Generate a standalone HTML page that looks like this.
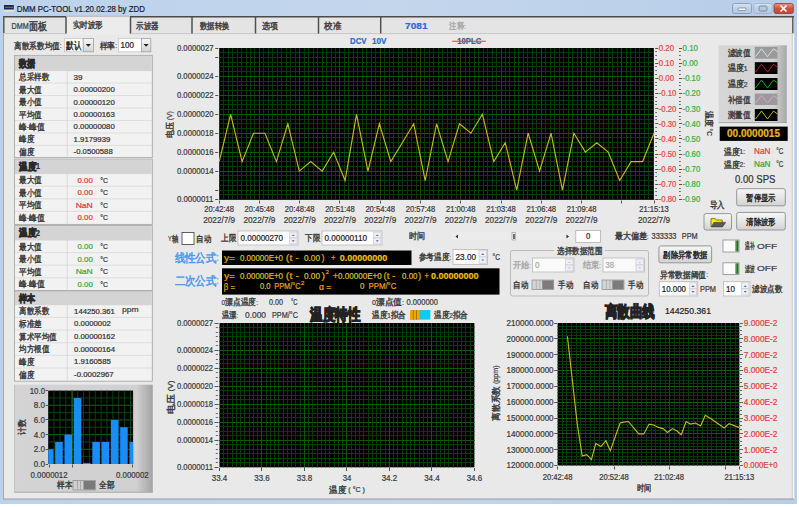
<!DOCTYPE html>
<html><head><meta charset="utf-8"><title>DMM PC-TOOL</title>
<style>
html,body{margin:0;padding:0;background:#fff;width:799px;height:507px;overflow:hidden}
svg{display:block;font-family:"Liberation Sans", sans-serif}
</style></head><body>
<svg width="799" height="507" viewBox="0 0 799 507">
<defs>
<linearGradient id="tb" x1="0" y1="0" x2="1" y2="0"><stop offset="0" stop-color="#bcd2ec"/><stop offset="0.5" stop-color="#c3d6ec"/><stop offset="1" stop-color="#b7cde8"/></linearGradient>
<linearGradient id="btn" x1="0" y1="0" x2="0" y2="1"><stop offset="0" stop-color="#f6f6f6"/><stop offset="0.5" stop-color="#e6e6e6"/><stop offset="1" stop-color="#d2d2d2"/></linearGradient>
<linearGradient id="leg" x1="0" y1="0" x2="1" y2="0"><stop offset="0" stop-color="#d6d6d6"/><stop offset="0.8" stop-color="#d2d2d2"/><stop offset="1" stop-color="#a8a8a8"/></linearGradient>
<linearGradient id="hist" x1="0" y1="0" x2="1" y2="0"><stop offset="0" stop-color="#d4d4d4"/><stop offset="0.88" stop-color="#d0d0d0"/><stop offset="1" stop-color="#a4a4a4"/></linearGradient>
<linearGradient id="close" x1="0" y1="0" x2="0" y2="1"><stop offset="0" stop-color="#e89a8a"/><stop offset="0.5" stop-color="#d0523e"/><stop offset="1" stop-color="#c84632"/></linearGradient>
<linearGradient id="wbtn" x1="0" y1="0" x2="0" y2="1"><stop offset="0" stop-color="#d4e2f2"/><stop offset="0.5" stop-color="#bcd0e8"/><stop offset="1" stop-color="#b4cae4"/></linearGradient>
</defs>
<rect x="0.00" y="0.00" width="797.00" height="504.00" fill="url(#tb)"/>
<rect x="4.00" y="5.00" width="9.80" height="4.60" fill="#1c2858"/>
<rect x="5.00" y="6.80" width="8.40" height="1.20" fill="#6a6a50"/>
<rect x="4.00" y="9.80" width="9.80" height="1.80" fill="#eee4c0"/>
<text x="16.70" y="11.71" font-size="9.6" fill="#1a1a2a" stroke="#1a1a2a" stroke-width="0.22" textLength="128.20" lengthAdjust="spacingAndGlyphs">DMM PC-TOOL v1.20.02.28 by ZDD</text>
<rect x="732.50" y="3.50" width="19.00" height="10.00" fill="url(#wbtn)" stroke="#7f93b0" stroke-width="0.8" rx="2"/>
<rect x="738.00" y="8.00" width="8.00" height="2.50" fill="#f8f8f8" stroke="#5a6a80" stroke-width="0.6" rx="1"/>
<rect x="753.70" y="3.50" width="18.50" height="10.00" fill="url(#wbtn)" stroke="#9fb3cc" stroke-width="0.8" rx="2"/>
<rect x="759.00" y="6.00" width="8.00" height="5.00" fill="#b8c8dc" stroke="#6a7a90" stroke-width="0.8" rx="1.5"/>
<rect x="774.00" y="3.50" width="19.30" height="10.00" fill="url(#close)" stroke="#8a3a30" stroke-width="0.8" rx="2"/>
<line x1="780.50" y1="5.50" x2="786.50" y2="11.50" stroke="#ffffff" stroke-width="1.6"/>
<line x1="786.50" y1="5.50" x2="780.50" y2="11.50" stroke="#ffffff" stroke-width="1.6"/>
<rect x="3.00" y="16.00" width="791.00" height="483.00" fill="#e9e9e9"/>
<rect x="3.00" y="16.50" width="791.00" height="17.00" fill="#e4e4e4"/>
<rect x="66.00" y="16.00" width="64.00" height="19.00" fill="#ececec"/>
<line x1="3.00" y1="16.80" x2="66.00" y2="16.80" stroke="#4a4a4a" stroke-width="1.4"/>
<line x1="130.00" y1="16.80" x2="794.00" y2="16.80" stroke="#4a4a4a" stroke-width="1.4"/>
<line x1="66.00" y1="16.30" x2="130.00" y2="16.30" stroke="#a8a8a8" stroke-width="0.8"/>
<line x1="3.80" y1="16.00" x2="3.80" y2="34.00" stroke="#555" stroke-width="1.5"/>
<line x1="3.50" y1="34.00" x2="3.50" y2="499.00" stroke="#a8a8a8" stroke-width="1"/>
<line x1="792.80" y1="16.00" x2="792.80" y2="34.00" stroke="#555" stroke-width="1.4"/>
<line x1="792.30" y1="34.00" x2="792.30" y2="499.00" stroke="#c4c4c4" stroke-width="1"/>
<rect x="792.80" y="34.00" width="1.50" height="465.00" fill="#f6f6f6"/>
<line x1="3.00" y1="499.00" x2="794.00" y2="499.00" stroke="#9a9a9a" stroke-width="1"/>
<line x1="3.00" y1="33.60" x2="66.00" y2="33.60" stroke="#c8c8c8" stroke-width="1"/>
<line x1="130.00" y1="33.60" x2="794.00" y2="33.60" stroke="#c8c8c8" stroke-width="1"/>
<line x1="66.00" y1="17.00" x2="66.00" y2="33.50" stroke="#505050" stroke-width="1.5"/>
<line x1="130.50" y1="17.00" x2="130.50" y2="33.50" stroke="#505050" stroke-width="1.5"/>
<line x1="192.00" y1="17.00" x2="192.00" y2="33.50" stroke="#505050" stroke-width="1.5"/>
<line x1="255.50" y1="17.00" x2="255.50" y2="33.50" stroke="#505050" stroke-width="1.5"/>
<line x1="318.50" y1="17.00" x2="318.50" y2="33.50" stroke="#505050" stroke-width="1.5"/>
<line x1="380.70" y1="17.00" x2="380.70" y2="33.50" stroke="#505050" stroke-width="1.5"/>
<text x="11.50" y="29.12" font-size="8.8" fill="#3a3a3a" stroke="#3a3a3a" stroke-width="0.22" textLength="35.40" lengthAdjust="spacingAndGlyphs">DMM<tspan dy="0.70" font-size="10.56" stroke-width="0.44">面板</tspan></text>
<text x="72.60" y="27.30" font-size="7.6" fill="#3a3a3a" stroke="#3a3a3a" stroke-width="0.22" textLength="30.40" lengthAdjust="spacingAndGlyphs"><tspan dy="0.61" font-size="9.12" stroke-width="0.40">实时波形</tspan></text>
<text x="136.30" y="28.70" font-size="7.6" fill="#3a3a3a" stroke="#3a3a3a" stroke-width="0.22" textLength="22.80" lengthAdjust="spacingAndGlyphs"><tspan dy="0.61" font-size="9.12" stroke-width="0.40">示波器</tspan></text>
<text x="199.80" y="28.70" font-size="7.6" fill="#3a3a3a" stroke="#3a3a3a" stroke-width="0.22" textLength="29.60" lengthAdjust="spacingAndGlyphs"><tspan dy="0.61" font-size="9.12" stroke-width="0.40">数据转换</tspan></text>
<text x="262.00" y="28.70" font-size="7.6" fill="#3a3a3a" stroke="#3a3a3a" stroke-width="0.22" textLength="16.00" lengthAdjust="spacingAndGlyphs"><tspan dy="0.61" font-size="9.12" stroke-width="0.40">选项</tspan></text>
<text x="324.00" y="28.70" font-size="7.6" fill="#3a3a3a" stroke="#3a3a3a" stroke-width="0.22" textLength="17.00" lengthAdjust="spacingAndGlyphs"><tspan dy="0.61" font-size="9.12" stroke-width="0.40">校准</tspan></text>
<text x="405.10" y="29.04" font-size="9.4" fill="#2b6ad6" stroke="#2b6ad6" stroke-width="0.22" font-weight="bold" textLength="22.50" lengthAdjust="spacingAndGlyphs">7081</text>
<text x="449.20" y="28.70" font-size="7.6" fill="#a8a8a8" stroke="#a8a8a8" stroke-width="0.22" textLength="16.80" lengthAdjust="spacingAndGlyphs"><tspan dy="0.61" font-size="9.12" stroke-width="0.40">注释</tspan><tspan dy="-0.61">:</tspan></text>
<text x="350.00" y="44.02" font-size="8.5" fill="#2b6ad6" stroke="#2b6ad6" stroke-width="0.22" font-weight="bold" textLength="16.50" lengthAdjust="spacingAndGlyphs">DCV</text>
<text x="372.00" y="44.02" font-size="8.5" fill="#2b6ad6" stroke="#2b6ad6" stroke-width="0.22" font-weight="bold" textLength="14.50" lengthAdjust="spacingAndGlyphs">10V</text>
<text x="457.20" y="44.02" font-size="8.5" fill="#4a5a98" stroke="#4a5a98" stroke-width="0.22" font-weight="bold" textLength="24.10" lengthAdjust="spacingAndGlyphs">10PLC</text>
<line x1="452.20" y1="41.30" x2="485.90" y2="41.30" stroke="#e04040" stroke-width="1.1"/>
<text x="14.10" y="47.90" font-size="7.6" fill="#3a3a3a" stroke="#3a3a3a" stroke-width="0.22" textLength="47.50" lengthAdjust="spacingAndGlyphs"><tspan dy="0.61" font-size="9.12" stroke-width="0.40">离散系数均值</tspan><tspan dy="-0.61">:</tspan></text>
<rect x="64.40" y="38.60" width="18.80" height="13.20" fill="#ffffff" stroke="#c8c8c8" stroke-width="0.8"/>
<rect x="83.20" y="38.60" width="10.30" height="13.20" fill="url(#btn)" stroke="#a0a0a0" stroke-width="0.8"/>
<path d="M85.75 44.00 L90.95 44.00 L88.35 46.80 Z" fill="#202020"/>
<text x="66.40" y="48.18" font-size="8.4" fill="#222" stroke="#222" stroke-width="0.22" textLength="15.10" lengthAdjust="spacingAndGlyphs"><tspan dy="0.67" font-size="10.08" stroke-width="0.42">默认</tspan></text>
<text x="99.70" y="47.90" font-size="7.6" fill="#3a3a3a" stroke="#3a3a3a" stroke-width="0.22" textLength="17.30" lengthAdjust="spacingAndGlyphs"><tspan dy="0.61" font-size="9.12" stroke-width="0.40">样率</tspan><tspan dy="-0.61">:</tspan></text>
<rect x="118.50" y="38.60" width="22.90" height="13.20" fill="#ffffff" stroke="#c8c8c8" stroke-width="0.8"/>
<rect x="141.40" y="38.60" width="9.40" height="13.20" fill="url(#btn)" stroke="#a0a0a0" stroke-width="0.8"/>
<path d="M143.50 44.00 L148.70 44.00 L146.10 46.80 Z" fill="#202020"/>
<text x="120.50" y="48.18" font-size="8.4" fill="#222" stroke="#222" stroke-width="0.22" textLength="13.40" lengthAdjust="spacingAndGlyphs">100</text>
<rect x="14.50" y="55.40" width="137.80" height="102.20" fill="#f2f2f2" stroke="#a8a8a8" stroke-width="0.9"/>
<rect x="15.00" y="55.90" width="136.80" height="15.20" fill="#d4d4d4"/>
<text x="19.10" y="65.98" font-size="8.4" fill="#2a2a2a" stroke="#2a2a2a" stroke-width="0.22" font-weight="bold" textLength="16.00" lengthAdjust="spacingAndGlyphs"><tspan dy="0.67" font-size="10.08" stroke-width="0.76">数据</tspan></text>
<line x1="67.30" y1="70.60" x2="67.30" y2="157.60" stroke="#d6d6d6" stroke-width="0.8"/>
<text x="19.10" y="79.53" font-size="7.6" fill="#3a3a3a" stroke="#3a3a3a" stroke-width="0.22" textLength="30.00" lengthAdjust="spacingAndGlyphs"><tspan dy="0.61" font-size="9.12" stroke-width="0.40">总采样数</tspan></text>
<text x="73.60" y="79.60" font-size="7.8" fill="#333" stroke="#333" stroke-width="0.22" textLength="9.00" lengthAdjust="spacingAndGlyphs">39</text>
<line x1="15.00" y1="83.07" x2="152.00" y2="83.07" stroke="#d8d8d8" stroke-width="0.8"/>
<text x="19.10" y="92.00" font-size="7.6" fill="#3a3a3a" stroke="#3a3a3a" stroke-width="0.22" textLength="22.50" lengthAdjust="spacingAndGlyphs"><tspan dy="0.61" font-size="9.12" stroke-width="0.40">最大值</tspan></text>
<text x="73.60" y="92.07" font-size="7.8" fill="#333" stroke="#333" stroke-width="0.22" textLength="41.20" lengthAdjust="spacingAndGlyphs">0.00000200</text>
<line x1="15.00" y1="95.54" x2="152.00" y2="95.54" stroke="#d8d8d8" stroke-width="0.8"/>
<text x="19.10" y="104.47" font-size="7.6" fill="#3a3a3a" stroke="#3a3a3a" stroke-width="0.22" textLength="22.50" lengthAdjust="spacingAndGlyphs"><tspan dy="0.61" font-size="9.12" stroke-width="0.40">最小值</tspan></text>
<text x="73.60" y="104.54" font-size="7.8" fill="#333" stroke="#333" stroke-width="0.22" textLength="41.20" lengthAdjust="spacingAndGlyphs">0.00000120</text>
<line x1="15.00" y1="108.01" x2="152.00" y2="108.01" stroke="#d8d8d8" stroke-width="0.8"/>
<text x="19.10" y="116.94" font-size="7.6" fill="#3a3a3a" stroke="#3a3a3a" stroke-width="0.22" textLength="22.50" lengthAdjust="spacingAndGlyphs"><tspan dy="0.61" font-size="9.12" stroke-width="0.40">平均值</tspan></text>
<text x="73.60" y="117.01" font-size="7.8" fill="#333" stroke="#333" stroke-width="0.22" textLength="41.20" lengthAdjust="spacingAndGlyphs">0.00000163</text>
<line x1="15.00" y1="120.48" x2="152.00" y2="120.48" stroke="#d8d8d8" stroke-width="0.8"/>
<text x="19.10" y="129.41" font-size="7.6" fill="#3a3a3a" stroke="#3a3a3a" stroke-width="0.22" textLength="25.10" lengthAdjust="spacingAndGlyphs"><tspan dy="0.61" font-size="9.12" stroke-width="0.40">峰</tspan><tspan dy="-0.61">-</tspan><tspan dy="0.61" font-size="9.12" stroke-width="0.40">峰值</tspan></text>
<text x="73.60" y="129.48" font-size="7.8" fill="#333" stroke="#333" stroke-width="0.22" textLength="41.20" lengthAdjust="spacingAndGlyphs">0.00000080</text>
<line x1="15.00" y1="132.95" x2="152.00" y2="132.95" stroke="#d8d8d8" stroke-width="0.8"/>
<text x="19.10" y="141.88" font-size="7.6" fill="#3a3a3a" stroke="#3a3a3a" stroke-width="0.22" textLength="15.00" lengthAdjust="spacingAndGlyphs"><tspan dy="0.61" font-size="9.12" stroke-width="0.40">峰度</tspan></text>
<text x="73.60" y="141.95" font-size="7.8" fill="#333" stroke="#333" stroke-width="0.22" textLength="36.70" lengthAdjust="spacingAndGlyphs">1.9179939</text>
<line x1="15.00" y1="145.42" x2="152.00" y2="145.42" stroke="#d8d8d8" stroke-width="0.8"/>
<text x="19.10" y="154.35" font-size="7.6" fill="#3a3a3a" stroke="#3a3a3a" stroke-width="0.22" textLength="15.00" lengthAdjust="spacingAndGlyphs"><tspan dy="0.61" font-size="9.12" stroke-width="0.40">偏度</tspan></text>
<text x="73.60" y="154.42" font-size="7.8" fill="#333" stroke="#333" stroke-width="0.22" textLength="39.10" lengthAdjust="spacingAndGlyphs">-0.0500588</text>
<rect x="14.50" y="159.20" width="137.80" height="65.20" fill="#f2f2f2" stroke="#a8a8a8" stroke-width="0.9"/>
<rect x="15.00" y="159.70" width="136.80" height="14.40" fill="#d4d4d4"/>
<text x="19.10" y="169.38" font-size="8.4" fill="#2a2a2a" stroke="#2a2a2a" stroke-width="0.22" font-weight="bold" textLength="21.00" lengthAdjust="spacingAndGlyphs"><tspan dy="0.67" font-size="10.08" stroke-width="0.76">温度</tspan><tspan dy="-0.67">1</tspan></text>
<line x1="67.30" y1="173.60" x2="67.30" y2="224.40" stroke="#d6d6d6" stroke-width="0.8"/>
<text x="19.10" y="182.60" font-size="7.6" fill="#3a3a3a" stroke="#3a3a3a" stroke-width="0.22" textLength="22.50" lengthAdjust="spacingAndGlyphs"><tspan dy="0.61" font-size="9.12" stroke-width="0.40">最大值</tspan></text>
<text x="77.50" y="182.67" font-size="7.8" fill="#e03838" stroke="#e03838" stroke-width="0.22" textLength="15.30" lengthAdjust="spacingAndGlyphs">0.00</text>
<text x="100.20" y="182.67" font-size="7.8" fill="#3a3a3a" stroke="#3a3a3a" stroke-width="0.22" textLength="7.80" lengthAdjust="spacingAndGlyphs">°C</text>
<line x1="15.00" y1="186.20" x2="152.00" y2="186.20" stroke="#d8d8d8" stroke-width="0.8"/>
<text x="19.10" y="195.20" font-size="7.6" fill="#3a3a3a" stroke="#3a3a3a" stroke-width="0.22" textLength="22.50" lengthAdjust="spacingAndGlyphs"><tspan dy="0.61" font-size="9.12" stroke-width="0.40">最小值</tspan></text>
<text x="77.50" y="195.27" font-size="7.8" fill="#e03838" stroke="#e03838" stroke-width="0.22" textLength="15.30" lengthAdjust="spacingAndGlyphs">0.00</text>
<text x="100.20" y="195.27" font-size="7.8" fill="#3a3a3a" stroke="#3a3a3a" stroke-width="0.22" textLength="7.80" lengthAdjust="spacingAndGlyphs">°C</text>
<line x1="15.00" y1="198.80" x2="152.00" y2="198.80" stroke="#d8d8d8" stroke-width="0.8"/>
<text x="19.10" y="207.80" font-size="7.6" fill="#3a3a3a" stroke="#3a3a3a" stroke-width="0.22" textLength="22.50" lengthAdjust="spacingAndGlyphs"><tspan dy="0.61" font-size="9.12" stroke-width="0.40">平均值</tspan></text>
<text x="75.70" y="207.87" font-size="7.8" fill="#e03838" stroke="#e03838" stroke-width="0.22" textLength="17.10" lengthAdjust="spacingAndGlyphs">NaN</text>
<text x="100.20" y="207.87" font-size="7.8" fill="#3a3a3a" stroke="#3a3a3a" stroke-width="0.22" textLength="7.80" lengthAdjust="spacingAndGlyphs">°C</text>
<line x1="15.00" y1="211.40" x2="152.00" y2="211.40" stroke="#d8d8d8" stroke-width="0.8"/>
<text x="19.10" y="220.40" font-size="7.6" fill="#3a3a3a" stroke="#3a3a3a" stroke-width="0.22" textLength="25.10" lengthAdjust="spacingAndGlyphs"><tspan dy="0.61" font-size="9.12" stroke-width="0.40">峰</tspan><tspan dy="-0.61">-</tspan><tspan dy="0.61" font-size="9.12" stroke-width="0.40">峰值</tspan></text>
<text x="77.50" y="220.47" font-size="7.8" fill="#e03838" stroke="#e03838" stroke-width="0.22" textLength="15.30" lengthAdjust="spacingAndGlyphs">0.00</text>
<text x="100.20" y="220.47" font-size="7.8" fill="#3a3a3a" stroke="#3a3a3a" stroke-width="0.22" textLength="7.80" lengthAdjust="spacingAndGlyphs">°C</text>
<rect x="14.50" y="225.60" width="137.80" height="65.00" fill="#f2f2f2" stroke="#a8a8a8" stroke-width="0.9"/>
<rect x="15.00" y="226.10" width="136.80" height="14.40" fill="#d4d4d4"/>
<text x="19.10" y="235.78" font-size="8.4" fill="#2a2a2a" stroke="#2a2a2a" stroke-width="0.22" font-weight="bold" textLength="21.00" lengthAdjust="spacingAndGlyphs"><tspan dy="0.67" font-size="10.08" stroke-width="0.76">温度</tspan><tspan dy="-0.67">2</tspan></text>
<line x1="67.30" y1="240.00" x2="67.30" y2="290.60" stroke="#d6d6d6" stroke-width="0.8"/>
<text x="19.10" y="249.00" font-size="7.6" fill="#3a3a3a" stroke="#3a3a3a" stroke-width="0.22" textLength="22.50" lengthAdjust="spacingAndGlyphs"><tspan dy="0.61" font-size="9.12" stroke-width="0.40">最大值</tspan></text>
<text x="77.50" y="249.07" font-size="7.8" fill="#38a838" stroke="#38a838" stroke-width="0.22" textLength="15.30" lengthAdjust="spacingAndGlyphs">0.00</text>
<text x="100.20" y="249.07" font-size="7.8" fill="#3a3a3a" stroke="#3a3a3a" stroke-width="0.22" textLength="7.80" lengthAdjust="spacingAndGlyphs">°C</text>
<line x1="15.00" y1="252.60" x2="152.00" y2="252.60" stroke="#d8d8d8" stroke-width="0.8"/>
<text x="19.10" y="261.60" font-size="7.6" fill="#3a3a3a" stroke="#3a3a3a" stroke-width="0.22" textLength="22.50" lengthAdjust="spacingAndGlyphs"><tspan dy="0.61" font-size="9.12" stroke-width="0.40">最小值</tspan></text>
<text x="77.50" y="261.67" font-size="7.8" fill="#38a838" stroke="#38a838" stroke-width="0.22" textLength="15.30" lengthAdjust="spacingAndGlyphs">0.00</text>
<text x="100.20" y="261.67" font-size="7.8" fill="#3a3a3a" stroke="#3a3a3a" stroke-width="0.22" textLength="7.80" lengthAdjust="spacingAndGlyphs">°C</text>
<line x1="15.00" y1="265.20" x2="152.00" y2="265.20" stroke="#d8d8d8" stroke-width="0.8"/>
<text x="19.10" y="274.20" font-size="7.6" fill="#3a3a3a" stroke="#3a3a3a" stroke-width="0.22" textLength="22.50" lengthAdjust="spacingAndGlyphs"><tspan dy="0.61" font-size="9.12" stroke-width="0.40">平均值</tspan></text>
<text x="75.70" y="274.27" font-size="7.8" fill="#38a838" stroke="#38a838" stroke-width="0.22" textLength="17.10" lengthAdjust="spacingAndGlyphs">NaN</text>
<text x="100.20" y="274.27" font-size="7.8" fill="#3a3a3a" stroke="#3a3a3a" stroke-width="0.22" textLength="7.80" lengthAdjust="spacingAndGlyphs">°C</text>
<line x1="15.00" y1="277.80" x2="152.00" y2="277.80" stroke="#d8d8d8" stroke-width="0.8"/>
<text x="19.10" y="286.80" font-size="7.6" fill="#3a3a3a" stroke="#3a3a3a" stroke-width="0.22" textLength="25.10" lengthAdjust="spacingAndGlyphs"><tspan dy="0.61" font-size="9.12" stroke-width="0.40">峰</tspan><tspan dy="-0.61">-</tspan><tspan dy="0.61" font-size="9.12" stroke-width="0.40">峰值</tspan></text>
<text x="77.50" y="286.87" font-size="7.8" fill="#38a838" stroke="#38a838" stroke-width="0.22" textLength="15.30" lengthAdjust="spacingAndGlyphs">0.00</text>
<text x="100.20" y="286.87" font-size="7.8" fill="#3a3a3a" stroke="#3a3a3a" stroke-width="0.22" textLength="7.80" lengthAdjust="spacingAndGlyphs">°C</text>
<rect x="14.50" y="291.20" width="137.80" height="90.00" fill="#f2f2f2" stroke="#a8a8a8" stroke-width="0.9"/>
<rect x="15.00" y="291.70" width="136.80" height="13.50" fill="#d4d4d4"/>
<text x="19.10" y="300.93" font-size="8.4" fill="#2a2a2a" stroke="#2a2a2a" stroke-width="0.22" font-weight="bold" textLength="16.00" lengthAdjust="spacingAndGlyphs"><tspan dy="0.67" font-size="10.08" stroke-width="0.76">样本</tspan></text>
<line x1="67.30" y1="304.70" x2="67.30" y2="381.20" stroke="#d6d6d6" stroke-width="0.8"/>
<text x="19.10" y="313.73" font-size="7.6" fill="#3a3a3a" stroke="#3a3a3a" stroke-width="0.22" textLength="30.00" lengthAdjust="spacingAndGlyphs"><tspan dy="0.61" font-size="9.12" stroke-width="0.40">离散系数</tspan></text>
<text x="74.10" y="313.80" font-size="7.8" fill="#333" stroke="#333" stroke-width="0.22" textLength="40.70" lengthAdjust="spacingAndGlyphs">144250.361</text>
<text x="122.00" y="311.87" font-size="8" fill="#3a3a3a" stroke="#3a3a3a" stroke-width="0.22" textLength="16.60" lengthAdjust="spacingAndGlyphs">ppm</text>
<line x1="15.00" y1="317.37" x2="152.00" y2="317.37" stroke="#d8d8d8" stroke-width="0.8"/>
<text x="19.10" y="326.40" font-size="7.6" fill="#3a3a3a" stroke="#3a3a3a" stroke-width="0.22" textLength="22.50" lengthAdjust="spacingAndGlyphs"><tspan dy="0.61" font-size="9.12" stroke-width="0.40">标准差</tspan></text>
<text x="74.10" y="326.47" font-size="7.8" fill="#333" stroke="#333" stroke-width="0.22" textLength="36.70" lengthAdjust="spacingAndGlyphs">0.0000002</text>
<line x1="15.00" y1="330.04" x2="152.00" y2="330.04" stroke="#d8d8d8" stroke-width="0.8"/>
<text x="19.10" y="339.07" font-size="7.6" fill="#3a3a3a" stroke="#3a3a3a" stroke-width="0.22" textLength="37.50" lengthAdjust="spacingAndGlyphs"><tspan dy="0.61" font-size="9.12" stroke-width="0.40">算术平均值</tspan></text>
<text x="74.10" y="339.14" font-size="7.8" fill="#333" stroke="#333" stroke-width="0.22" textLength="40.90" lengthAdjust="spacingAndGlyphs">0.00000162</text>
<line x1="15.00" y1="342.71" x2="152.00" y2="342.71" stroke="#d8d8d8" stroke-width="0.8"/>
<text x="19.10" y="351.74" font-size="7.6" fill="#3a3a3a" stroke="#3a3a3a" stroke-width="0.22" textLength="30.00" lengthAdjust="spacingAndGlyphs"><tspan dy="0.61" font-size="9.12" stroke-width="0.40">均方根值</tspan></text>
<text x="74.10" y="351.81" font-size="7.8" fill="#333" stroke="#333" stroke-width="0.22" textLength="40.90" lengthAdjust="spacingAndGlyphs">0.00000164</text>
<line x1="15.00" y1="355.38" x2="152.00" y2="355.38" stroke="#d8d8d8" stroke-width="0.8"/>
<text x="19.10" y="364.41" font-size="7.6" fill="#3a3a3a" stroke="#3a3a3a" stroke-width="0.22" textLength="15.00" lengthAdjust="spacingAndGlyphs"><tspan dy="0.61" font-size="9.12" stroke-width="0.40">峰度</tspan></text>
<text x="74.10" y="364.48" font-size="7.8" fill="#333" stroke="#333" stroke-width="0.22" textLength="36.70" lengthAdjust="spacingAndGlyphs">1.9160585</text>
<line x1="15.00" y1="368.05" x2="152.00" y2="368.05" stroke="#d8d8d8" stroke-width="0.8"/>
<text x="19.10" y="377.08" font-size="7.6" fill="#3a3a3a" stroke="#3a3a3a" stroke-width="0.22" textLength="15.00" lengthAdjust="spacingAndGlyphs"><tspan dy="0.61" font-size="9.12" stroke-width="0.40">偏度</tspan></text>
<text x="74.10" y="377.15" font-size="7.8" fill="#333" stroke="#333" stroke-width="0.22" textLength="39.60" lengthAdjust="spacingAndGlyphs">-0.0002967</text>
<rect x="14.40" y="384.70" width="138.40" height="107.70" fill="url(#hist)"/>
<line x1="14.40" y1="492.20" x2="152.80" y2="492.20" stroke="#a8a8a8" stroke-width="1"/>
<line x1="14.60" y1="384.70" x2="14.60" y2="492.40" stroke="#bdbdbd" stroke-width="0.8"/>
<rect x="48.20" y="390.60" width="84.90" height="73.40" fill="#000"/>
<line x1="48.20" y1="397.94" x2="133.10" y2="397.94" stroke="#0c4a0c" stroke-width="0.9"/>
<line x1="48.20" y1="405.28" x2="133.10" y2="405.28" stroke="#137013" stroke-width="0.9"/>
<line x1="48.20" y1="412.62" x2="133.10" y2="412.62" stroke="#0c4a0c" stroke-width="0.9"/>
<line x1="48.20" y1="419.96" x2="133.10" y2="419.96" stroke="#137013" stroke-width="0.9"/>
<line x1="48.20" y1="427.30" x2="133.10" y2="427.30" stroke="#0c4a0c" stroke-width="0.9"/>
<line x1="48.20" y1="434.64" x2="133.10" y2="434.64" stroke="#137013" stroke-width="0.9"/>
<line x1="48.20" y1="441.98" x2="133.10" y2="441.98" stroke="#0c4a0c" stroke-width="0.9"/>
<line x1="48.20" y1="449.32" x2="133.10" y2="449.32" stroke="#137013" stroke-width="0.9"/>
<line x1="48.20" y1="456.66" x2="133.10" y2="456.66" stroke="#0c4a0c" stroke-width="0.9"/>
<line x1="54.08" y1="390.60" x2="54.08" y2="464.00" stroke="#0c4a0c" stroke-width="0.9"/>
<line x1="59.96" y1="390.60" x2="59.96" y2="464.00" stroke="#0c4a0c" stroke-width="0.9"/>
<line x1="65.84" y1="390.60" x2="65.84" y2="464.00" stroke="#0c4a0c" stroke-width="0.9"/>
<line x1="71.72" y1="390.60" x2="71.72" y2="464.00" stroke="#0c4a0c" stroke-width="0.9"/>
<line x1="77.60" y1="390.60" x2="77.60" y2="464.00" stroke="#0c4a0c" stroke-width="0.9"/>
<line x1="83.48" y1="390.60" x2="83.48" y2="464.00" stroke="#0c4a0c" stroke-width="0.9"/>
<line x1="89.36" y1="390.60" x2="89.36" y2="464.00" stroke="#0c4a0c" stroke-width="0.9"/>
<line x1="95.24" y1="390.60" x2="95.24" y2="464.00" stroke="#0c4a0c" stroke-width="0.9"/>
<line x1="101.12" y1="390.60" x2="101.12" y2="464.00" stroke="#0c4a0c" stroke-width="0.9"/>
<line x1="107.00" y1="390.60" x2="107.00" y2="464.00" stroke="#0c4a0c" stroke-width="0.9"/>
<line x1="112.88" y1="390.60" x2="112.88" y2="464.00" stroke="#0c4a0c" stroke-width="0.9"/>
<line x1="118.76" y1="390.60" x2="118.76" y2="464.00" stroke="#0c4a0c" stroke-width="0.9"/>
<line x1="124.64" y1="390.60" x2="124.64" y2="464.00" stroke="#0c4a0c" stroke-width="0.9"/>
<line x1="130.52" y1="390.60" x2="130.52" y2="464.00" stroke="#0c4a0c" stroke-width="0.9"/>
<line x1="72.30" y1="390.60" x2="72.30" y2="464.00" stroke="#1a6a1a" stroke-width="0.9"/>
<rect x="48.20" y="449.32" width="5.30" height="14.68" fill="#1a8cf8"/>
<rect x="55.18" y="441.98" width="7.60" height="22.02" fill="#1a8cf8"/>
<rect x="64.46" y="434.64" width="7.60" height="29.36" fill="#1a8cf8"/>
<rect x="73.74" y="397.94" width="7.60" height="66.06" fill="#1a8cf8"/>
<rect x="83.02" y="462.90" width="7.60" height="1.10" fill="#1a8cf8"/>
<rect x="92.30" y="441.98" width="7.60" height="22.02" fill="#1a8cf8"/>
<rect x="101.58" y="441.98" width="7.60" height="22.02" fill="#1a8cf8"/>
<rect x="110.86" y="419.96" width="7.60" height="44.04" fill="#1a8cf8"/>
<rect x="120.14" y="427.30" width="7.60" height="36.70" fill="#1a8cf8"/>
<rect x="129.42" y="441.98" width="3.68" height="22.02" fill="#1a8cf8"/>
<text x="29.70" y="393.58" font-size="8.4" fill="#3a3a3a" stroke="#3a3a3a" stroke-width="0.22" textLength="15.40" lengthAdjust="spacingAndGlyphs">10.0</text>
<line x1="45.60" y1="390.50" x2="48.00" y2="390.50" stroke="#555" stroke-width="1"/>
<text x="33.80" y="408.26" font-size="8.4" fill="#3a3a3a" stroke="#3a3a3a" stroke-width="0.22" textLength="11.30" lengthAdjust="spacingAndGlyphs">8.0</text>
<line x1="45.60" y1="405.50" x2="48.00" y2="405.50" stroke="#555" stroke-width="1"/>
<text x="33.80" y="422.94" font-size="8.4" fill="#3a3a3a" stroke="#3a3a3a" stroke-width="0.22" textLength="11.30" lengthAdjust="spacingAndGlyphs">6.0</text>
<line x1="45.60" y1="419.50" x2="48.00" y2="419.50" stroke="#555" stroke-width="1"/>
<text x="33.80" y="437.62" font-size="8.4" fill="#3a3a3a" stroke="#3a3a3a" stroke-width="0.22" textLength="11.30" lengthAdjust="spacingAndGlyphs">4.0</text>
<line x1="45.60" y1="434.50" x2="48.00" y2="434.50" stroke="#555" stroke-width="1"/>
<text x="33.80" y="452.30" font-size="8.4" fill="#3a3a3a" stroke="#3a3a3a" stroke-width="0.22" textLength="11.30" lengthAdjust="spacingAndGlyphs">2.0</text>
<line x1="45.60" y1="449.50" x2="48.00" y2="449.50" stroke="#555" stroke-width="1"/>
<text x="33.80" y="466.98" font-size="8.4" fill="#3a3a3a" stroke="#3a3a3a" stroke-width="0.22" textLength="11.30" lengthAdjust="spacingAndGlyphs">0.0</text>
<line x1="45.60" y1="464.50" x2="48.00" y2="464.50" stroke="#555" stroke-width="1"/>
<line x1="49.50" y1="464.50" x2="49.50" y2="467.50" stroke="#555" stroke-width="1"/>
<line x1="72.50" y1="464.50" x2="72.50" y2="467.50" stroke="#555" stroke-width="1"/>
<line x1="132.50" y1="464.50" x2="132.50" y2="467.50" stroke="#555" stroke-width="1"/>
<text x="30.50" y="477.58" font-size="8.4" fill="#3a3a3a" stroke="#3a3a3a" stroke-width="0.22" textLength="37.10" lengthAdjust="spacingAndGlyphs">0.0000012</text>
<text x="116.00" y="477.58" font-size="8.4" fill="#3a3a3a" stroke="#3a3a3a" stroke-width="0.22" textLength="32.70" lengthAdjust="spacingAndGlyphs">0.000002</text>
<text x="13.70" y="430.00" font-size="7.6" fill="#3a3a3a" stroke="#3a3a3a" stroke-width="0.22" textLength="15.60" lengthAdjust="spacingAndGlyphs" transform="rotate(-90 21.50 427.30)"><tspan dy="0.61" font-size="9.12" stroke-width="0.40">计数</tspan></text>
<text x="57.00" y="487.50" font-size="7.6" fill="#3a3a3a" stroke="#3a3a3a" stroke-width="0.22" textLength="15.30" lengthAdjust="spacingAndGlyphs"><tspan dy="0.61" font-size="9.12" stroke-width="0.40">样本</tspan></text>
<rect x="73.00" y="480.50" width="22.30" height="9.50" fill="#cfcfcf" stroke="#8a8a8a" stroke-width="0.7"/>
<rect x="83.50" y="481.00" width="11.50" height="8.50" fill="#7a7a7a"/>
<line x1="77.50" y1="481.00" x2="77.50" y2="489.50" stroke="#9a9a9a" stroke-width="0.7"/>
<line x1="80.50" y1="481.00" x2="80.50" y2="489.50" stroke="#9a9a9a" stroke-width="0.7"/>
<text x="99.00" y="487.50" font-size="7.6" fill="#3a3a3a" stroke="#3a3a3a" stroke-width="0.22" textLength="15.20" lengthAdjust="spacingAndGlyphs"><tspan dy="0.61" font-size="9.12" stroke-width="0.40">全部</tspan></text>
<rect x="219.20" y="48.00" width="434.80" height="151.50" fill="#000"/>
<path d="M219.20 52.50H654.00M219.20 57.50H654.00M219.20 62.50H654.00M219.20 66.50H654.00M219.20 71.50H654.00M219.20 76.50H654.00M219.20 81.50H654.00M219.20 85.50H654.00M219.20 90.50H654.00M219.20 95.50H654.00M219.20 100.50H654.00M219.20 104.50H654.00M219.20 109.50H654.00M219.20 114.50H654.00M219.20 119.50H654.00M219.20 123.50H654.00M219.20 128.50H654.00M219.20 133.50H654.00M219.20 137.50H654.00M219.20 142.50H654.00M219.20 147.50H654.00M219.20 152.50H654.00M219.20 156.50H654.00M219.20 161.50H654.00M219.20 166.50H654.00M219.20 171.50H654.00M219.20 175.50H654.00M219.20 180.50H654.00M219.20 185.50H654.00M219.20 190.50H654.00M219.20 194.50H654.00M219.20 199.50H654.00" stroke="#073a07" stroke-width="1" fill="none"/>
<path d="M223.50 48.00V199.50M228.50 48.00V199.50M232.50 48.00V199.50M237.50 48.00V199.50M241.50 48.00V199.50M246.50 48.00V199.50M250.50 48.00V199.50M254.50 48.00V199.50M259.50 48.00V199.50M263.50 48.00V199.50M268.50 48.00V199.50M272.50 48.00V199.50M277.50 48.00V199.50M281.50 48.00V199.50M286.50 48.00V199.50M290.50 48.00V199.50M295.50 48.00V199.50M299.50 48.00V199.50M304.50 48.00V199.50M308.50 48.00V199.50M313.50 48.00V199.50M317.50 48.00V199.50M322.50 48.00V199.50M326.50 48.00V199.50M331.50 48.00V199.50M335.50 48.00V199.50M339.50 48.00V199.50M344.50 48.00V199.50M348.50 48.00V199.50M353.50 48.00V199.50M357.50 48.00V199.50M362.50 48.00V199.50M366.50 48.00V199.50M371.50 48.00V199.50M375.50 48.00V199.50M380.50 48.00V199.50M384.50 48.00V199.50M389.50 48.00V199.50M393.50 48.00V199.50M398.50 48.00V199.50M402.50 48.00V199.50M407.50 48.00V199.50M411.50 48.00V199.50M416.50 48.00V199.50M420.50 48.00V199.50M424.50 48.00V199.50M429.50 48.00V199.50M433.50 48.00V199.50M438.50 48.00V199.50M442.50 48.00V199.50M447.50 48.00V199.50M451.50 48.00V199.50M456.50 48.00V199.50M460.50 48.00V199.50M465.50 48.00V199.50M469.50 48.00V199.50M474.50 48.00V199.50M478.50 48.00V199.50M483.50 48.00V199.50M487.50 48.00V199.50M492.50 48.00V199.50M496.50 48.00V199.50M501.50 48.00V199.50M505.50 48.00V199.50M509.50 48.00V199.50M514.50 48.00V199.50M518.50 48.00V199.50M523.50 48.00V199.50M527.50 48.00V199.50M532.50 48.00V199.50M536.50 48.00V199.50M541.50 48.00V199.50M545.50 48.00V199.50M550.50 48.00V199.50M554.50 48.00V199.50M559.50 48.00V199.50M563.50 48.00V199.50M568.50 48.00V199.50M572.50 48.00V199.50M577.50 48.00V199.50M581.50 48.00V199.50M586.50 48.00V199.50M590.50 48.00V199.50M594.50 48.00V199.50M599.50 48.00V199.50M603.50 48.00V199.50M608.50 48.00V199.50M612.50 48.00V199.50M617.50 48.00V199.50M621.50 48.00V199.50M626.50 48.00V199.50M630.50 48.00V199.50M635.50 48.00V199.50M639.50 48.00V199.50M644.50 48.00V199.50M648.50 48.00V199.50M653.50 48.00V199.50" stroke="#073a07" stroke-width="1" fill="none"/>
<path d="M219.20 76.50H654.00M219.20 95.50H654.00M219.20 114.50H654.00M219.20 133.50H654.00M219.20 152.50H654.00M219.20 171.50H654.00" stroke="#0b5a0b" stroke-width="1" fill="none"/>
<path d="M259.50 48.00V199.50M299.50 48.00V199.50M339.50 48.00V199.50M380.50 48.00V199.50M420.50 48.00V199.50M460.50 48.00V199.50M501.50 48.00V199.50M541.50 48.00V199.50M581.50 48.00V199.50M621.50 48.00V199.50" stroke="#2c4006" stroke-width="1" fill="none"/>
<polyline points="219.20,161.62 230.64,114.28 242.08,161.62 253.53,133.22 264.97,133.22 276.41,161.62 287.85,123.75 299.29,171.09 310.74,161.62 322.18,171.09 333.62,152.16 345.06,180.56 356.51,114.28 367.95,171.09 379.39,123.75 390.83,161.62 402.27,142.69 413.72,123.75 425.16,180.56 436.60,123.75 448.04,161.62 459.48,123.75 470.93,133.22 482.37,114.28 493.81,161.62 505.25,142.69 516.69,190.03 528.14,133.22 539.58,171.09 551.02,133.22 562.46,190.03 573.91,133.22 585.35,152.16 596.79,142.69 608.23,152.16 619.67,180.56 631.12,161.62 642.56,161.62 654.00,133.22" fill="none" stroke="#c4b81a" stroke-width="1.15" stroke-linejoin="miter"/>
<text x="176.90" y="50.98" font-size="8.4" fill="#3a3a3a" stroke="#3a3a3a" stroke-width="0.22" textLength="36.60" lengthAdjust="spacingAndGlyphs">0.0000027</text>
<line x1="215.20" y1="48.50" x2="218.20" y2="48.50" stroke="#555" stroke-width="1"/>
<text x="176.90" y="79.39" font-size="8.4" fill="#3a3a3a" stroke="#3a3a3a" stroke-width="0.22" textLength="36.60" lengthAdjust="spacingAndGlyphs">0.0000024</text>
<line x1="215.20" y1="76.50" x2="218.20" y2="76.50" stroke="#555" stroke-width="1"/>
<text x="176.90" y="98.33" font-size="8.4" fill="#3a3a3a" stroke="#3a3a3a" stroke-width="0.22" textLength="36.60" lengthAdjust="spacingAndGlyphs">0.0000022</text>
<line x1="215.20" y1="95.50" x2="218.20" y2="95.50" stroke="#555" stroke-width="1"/>
<text x="176.90" y="117.26" font-size="8.4" fill="#3a3a3a" stroke="#3a3a3a" stroke-width="0.22" textLength="36.60" lengthAdjust="spacingAndGlyphs">0.0000020</text>
<line x1="215.20" y1="114.50" x2="218.20" y2="114.50" stroke="#555" stroke-width="1"/>
<text x="176.90" y="136.20" font-size="8.4" fill="#3a3a3a" stroke="#3a3a3a" stroke-width="0.22" textLength="36.60" lengthAdjust="spacingAndGlyphs">0.0000018</text>
<line x1="215.20" y1="133.50" x2="218.20" y2="133.50" stroke="#555" stroke-width="1"/>
<text x="176.90" y="155.14" font-size="8.4" fill="#3a3a3a" stroke="#3a3a3a" stroke-width="0.22" textLength="36.60" lengthAdjust="spacingAndGlyphs">0.0000016</text>
<line x1="215.20" y1="152.50" x2="218.20" y2="152.50" stroke="#555" stroke-width="1"/>
<text x="176.90" y="174.08" font-size="8.4" fill="#3a3a3a" stroke="#3a3a3a" stroke-width="0.22" textLength="36.60" lengthAdjust="spacingAndGlyphs">0.0000014</text>
<line x1="215.20" y1="171.50" x2="218.20" y2="171.50" stroke="#555" stroke-width="1"/>
<text x="176.90" y="202.48" font-size="8.4" fill="#3a3a3a" stroke="#3a3a3a" stroke-width="0.22" textLength="36.60" lengthAdjust="spacingAndGlyphs">0.0000011</text>
<line x1="215.20" y1="199.50" x2="218.20" y2="199.50" stroke="#555" stroke-width="1"/>
<line x1="215.20" y1="57.50" x2="218.20" y2="57.50" stroke="#555" stroke-width="1"/>
<line x1="215.20" y1="190.50" x2="218.20" y2="190.50" stroke="#555" stroke-width="1"/>
<text x="156.00" y="127.50" font-size="7.6" fill="#3a3a3a" stroke="#3a3a3a" stroke-width="0.22" textLength="27.00" lengthAdjust="spacingAndGlyphs" transform="rotate(-90 169.50 124.80)"><tspan dy="0.61" font-size="9.12" stroke-width="0.40">电压</tspan><tspan dy="-0.61"> (V)</tspan></text>
<line x1="219.50" y1="200.50" x2="219.50" y2="203.50" stroke="#555" stroke-width="1"/>
<text x="204.35" y="212.38" font-size="8.4" fill="#3a3a3a" stroke="#3a3a3a" stroke-width="0.22" textLength="29.70" lengthAdjust="spacingAndGlyphs">20:42:48</text>
<text x="203.20" y="223.48" font-size="8.4" fill="#3a3a3a" stroke="#3a3a3a" stroke-width="0.22" textLength="32.00" lengthAdjust="spacingAndGlyphs">2022/7/9</text>
<line x1="259.50" y1="200.50" x2="259.50" y2="203.50" stroke="#555" stroke-width="1"/>
<text x="244.61" y="212.38" font-size="8.4" fill="#3a3a3a" stroke="#3a3a3a" stroke-width="0.22" textLength="29.70" lengthAdjust="spacingAndGlyphs">20:45:48</text>
<text x="243.46" y="223.48" font-size="8.4" fill="#3a3a3a" stroke="#3a3a3a" stroke-width="0.22" textLength="32.00" lengthAdjust="spacingAndGlyphs">2022/7/9</text>
<line x1="299.50" y1="200.50" x2="299.50" y2="203.50" stroke="#555" stroke-width="1"/>
<text x="284.87" y="212.38" font-size="8.4" fill="#3a3a3a" stroke="#3a3a3a" stroke-width="0.22" textLength="29.70" lengthAdjust="spacingAndGlyphs">20:48:48</text>
<text x="283.72" y="223.48" font-size="8.4" fill="#3a3a3a" stroke="#3a3a3a" stroke-width="0.22" textLength="32.00" lengthAdjust="spacingAndGlyphs">2022/7/9</text>
<line x1="339.50" y1="200.50" x2="339.50" y2="203.50" stroke="#555" stroke-width="1"/>
<text x="325.13" y="212.38" font-size="8.4" fill="#3a3a3a" stroke="#3a3a3a" stroke-width="0.22" textLength="29.70" lengthAdjust="spacingAndGlyphs">20:51:48</text>
<text x="323.98" y="223.48" font-size="8.4" fill="#3a3a3a" stroke="#3a3a3a" stroke-width="0.22" textLength="32.00" lengthAdjust="spacingAndGlyphs">2022/7/9</text>
<line x1="380.50" y1="200.50" x2="380.50" y2="203.50" stroke="#555" stroke-width="1"/>
<text x="365.39" y="212.38" font-size="8.4" fill="#3a3a3a" stroke="#3a3a3a" stroke-width="0.22" textLength="29.70" lengthAdjust="spacingAndGlyphs">20:54:48</text>
<text x="364.24" y="223.48" font-size="8.4" fill="#3a3a3a" stroke="#3a3a3a" stroke-width="0.22" textLength="32.00" lengthAdjust="spacingAndGlyphs">2022/7/9</text>
<line x1="420.50" y1="200.50" x2="420.50" y2="203.50" stroke="#555" stroke-width="1"/>
<text x="405.65" y="212.38" font-size="8.4" fill="#3a3a3a" stroke="#3a3a3a" stroke-width="0.22" textLength="29.70" lengthAdjust="spacingAndGlyphs">20:57:48</text>
<text x="404.50" y="223.48" font-size="8.4" fill="#3a3a3a" stroke="#3a3a3a" stroke-width="0.22" textLength="32.00" lengthAdjust="spacingAndGlyphs">2022/7/9</text>
<line x1="460.50" y1="200.50" x2="460.50" y2="203.50" stroke="#555" stroke-width="1"/>
<text x="445.91" y="212.38" font-size="8.4" fill="#3a3a3a" stroke="#3a3a3a" stroke-width="0.22" textLength="29.70" lengthAdjust="spacingAndGlyphs">21:00:48</text>
<text x="444.76" y="223.48" font-size="8.4" fill="#3a3a3a" stroke="#3a3a3a" stroke-width="0.22" textLength="32.00" lengthAdjust="spacingAndGlyphs">2022/7/9</text>
<line x1="501.50" y1="200.50" x2="501.50" y2="203.50" stroke="#555" stroke-width="1"/>
<text x="486.17" y="212.38" font-size="8.4" fill="#3a3a3a" stroke="#3a3a3a" stroke-width="0.22" textLength="29.70" lengthAdjust="spacingAndGlyphs">21:03:48</text>
<text x="485.02" y="223.48" font-size="8.4" fill="#3a3a3a" stroke="#3a3a3a" stroke-width="0.22" textLength="32.00" lengthAdjust="spacingAndGlyphs">2022/7/9</text>
<line x1="541.50" y1="200.50" x2="541.50" y2="203.50" stroke="#555" stroke-width="1"/>
<text x="526.43" y="212.38" font-size="8.4" fill="#3a3a3a" stroke="#3a3a3a" stroke-width="0.22" textLength="29.70" lengthAdjust="spacingAndGlyphs">21:06:48</text>
<text x="525.28" y="223.48" font-size="8.4" fill="#3a3a3a" stroke="#3a3a3a" stroke-width="0.22" textLength="32.00" lengthAdjust="spacingAndGlyphs">2022/7/9</text>
<line x1="581.50" y1="200.50" x2="581.50" y2="203.50" stroke="#555" stroke-width="1"/>
<text x="566.69" y="212.38" font-size="8.4" fill="#3a3a3a" stroke="#3a3a3a" stroke-width="0.22" textLength="29.70" lengthAdjust="spacingAndGlyphs">21:09:48</text>
<text x="565.54" y="223.48" font-size="8.4" fill="#3a3a3a" stroke="#3a3a3a" stroke-width="0.22" textLength="32.00" lengthAdjust="spacingAndGlyphs">2022/7/9</text>
<line x1="621.50" y1="200.50" x2="621.50" y2="203.50" stroke="#555" stroke-width="1"/>
<line x1="654.50" y1="200.50" x2="654.50" y2="203.50" stroke="#555" stroke-width="1"/>
<text x="639.15" y="212.38" font-size="8.4" fill="#3a3a3a" stroke="#3a3a3a" stroke-width="0.22" textLength="29.70" lengthAdjust="spacingAndGlyphs">21:15:13</text>
<text x="638.00" y="223.48" font-size="8.4" fill="#3a3a3a" stroke="#3a3a3a" stroke-width="0.22" textLength="32.00" lengthAdjust="spacingAndGlyphs">2022/7/9</text>
<line x1="655.20" y1="48.50" x2="658.30" y2="48.50" stroke="#555" stroke-width="1"/>
<line x1="679.00" y1="48.50" x2="682.00" y2="48.50" stroke="#555" stroke-width="1"/>
<line x1="655.20" y1="51.50" x2="657.00" y2="51.50" stroke="#666" stroke-width="1"/>
<line x1="679.00" y1="51.50" x2="680.80" y2="51.50" stroke="#666" stroke-width="1"/>
<line x1="655.20" y1="55.50" x2="657.00" y2="55.50" stroke="#666" stroke-width="1"/>
<line x1="679.00" y1="55.50" x2="680.80" y2="55.50" stroke="#666" stroke-width="1"/>
<line x1="655.20" y1="59.50" x2="657.00" y2="59.50" stroke="#666" stroke-width="1"/>
<line x1="679.00" y1="59.50" x2="680.80" y2="59.50" stroke="#666" stroke-width="1"/>
<line x1="655.20" y1="63.50" x2="658.30" y2="63.50" stroke="#555" stroke-width="1"/>
<line x1="679.00" y1="63.50" x2="682.00" y2="63.50" stroke="#555" stroke-width="1"/>
<line x1="655.20" y1="66.50" x2="657.00" y2="66.50" stroke="#666" stroke-width="1"/>
<line x1="679.00" y1="66.50" x2="680.80" y2="66.50" stroke="#666" stroke-width="1"/>
<line x1="655.20" y1="70.50" x2="657.00" y2="70.50" stroke="#666" stroke-width="1"/>
<line x1="679.00" y1="70.50" x2="680.80" y2="70.50" stroke="#666" stroke-width="1"/>
<line x1="655.20" y1="74.50" x2="657.00" y2="74.50" stroke="#666" stroke-width="1"/>
<line x1="679.00" y1="74.50" x2="680.80" y2="74.50" stroke="#666" stroke-width="1"/>
<line x1="655.20" y1="78.50" x2="658.30" y2="78.50" stroke="#555" stroke-width="1"/>
<line x1="679.00" y1="78.50" x2="682.00" y2="78.50" stroke="#555" stroke-width="1"/>
<line x1="655.20" y1="82.50" x2="657.00" y2="82.50" stroke="#666" stroke-width="1"/>
<line x1="679.00" y1="82.50" x2="680.80" y2="82.50" stroke="#666" stroke-width="1"/>
<line x1="655.20" y1="85.50" x2="657.00" y2="85.50" stroke="#666" stroke-width="1"/>
<line x1="679.00" y1="85.50" x2="680.80" y2="85.50" stroke="#666" stroke-width="1"/>
<line x1="655.20" y1="89.50" x2="657.00" y2="89.50" stroke="#666" stroke-width="1"/>
<line x1="679.00" y1="89.50" x2="680.80" y2="89.50" stroke="#666" stroke-width="1"/>
<line x1="655.20" y1="93.50" x2="658.30" y2="93.50" stroke="#555" stroke-width="1"/>
<line x1="679.00" y1="93.50" x2="682.00" y2="93.50" stroke="#555" stroke-width="1"/>
<line x1="655.20" y1="97.50" x2="657.00" y2="97.50" stroke="#666" stroke-width="1"/>
<line x1="679.00" y1="97.50" x2="680.80" y2="97.50" stroke="#666" stroke-width="1"/>
<line x1="655.20" y1="101.50" x2="657.00" y2="101.50" stroke="#666" stroke-width="1"/>
<line x1="679.00" y1="101.50" x2="680.80" y2="101.50" stroke="#666" stroke-width="1"/>
<line x1="655.20" y1="104.50" x2="657.00" y2="104.50" stroke="#666" stroke-width="1"/>
<line x1="679.00" y1="104.50" x2="680.80" y2="104.50" stroke="#666" stroke-width="1"/>
<line x1="655.20" y1="108.50" x2="658.30" y2="108.50" stroke="#555" stroke-width="1"/>
<line x1="679.00" y1="108.50" x2="682.00" y2="108.50" stroke="#555" stroke-width="1"/>
<line x1="655.20" y1="112.50" x2="657.00" y2="112.50" stroke="#666" stroke-width="1"/>
<line x1="679.00" y1="112.50" x2="680.80" y2="112.50" stroke="#666" stroke-width="1"/>
<line x1="655.20" y1="116.50" x2="657.00" y2="116.50" stroke="#666" stroke-width="1"/>
<line x1="679.00" y1="116.50" x2="680.80" y2="116.50" stroke="#666" stroke-width="1"/>
<line x1="655.20" y1="119.50" x2="657.00" y2="119.50" stroke="#666" stroke-width="1"/>
<line x1="679.00" y1="119.50" x2="680.80" y2="119.50" stroke="#666" stroke-width="1"/>
<line x1="655.20" y1="123.50" x2="658.30" y2="123.50" stroke="#555" stroke-width="1"/>
<line x1="679.00" y1="123.50" x2="682.00" y2="123.50" stroke="#555" stroke-width="1"/>
<line x1="655.20" y1="127.50" x2="657.00" y2="127.50" stroke="#666" stroke-width="1"/>
<line x1="679.00" y1="127.50" x2="680.80" y2="127.50" stroke="#666" stroke-width="1"/>
<line x1="655.20" y1="131.50" x2="657.00" y2="131.50" stroke="#666" stroke-width="1"/>
<line x1="679.00" y1="131.50" x2="680.80" y2="131.50" stroke="#666" stroke-width="1"/>
<line x1="655.20" y1="135.50" x2="657.00" y2="135.50" stroke="#666" stroke-width="1"/>
<line x1="679.00" y1="135.50" x2="680.80" y2="135.50" stroke="#666" stroke-width="1"/>
<line x1="655.20" y1="138.50" x2="658.30" y2="138.50" stroke="#555" stroke-width="1"/>
<line x1="679.00" y1="138.50" x2="682.00" y2="138.50" stroke="#555" stroke-width="1"/>
<line x1="655.20" y1="142.50" x2="657.00" y2="142.50" stroke="#666" stroke-width="1"/>
<line x1="679.00" y1="142.50" x2="680.80" y2="142.50" stroke="#666" stroke-width="1"/>
<line x1="655.20" y1="146.50" x2="657.00" y2="146.50" stroke="#666" stroke-width="1"/>
<line x1="679.00" y1="146.50" x2="680.80" y2="146.50" stroke="#666" stroke-width="1"/>
<line x1="655.20" y1="150.50" x2="657.00" y2="150.50" stroke="#666" stroke-width="1"/>
<line x1="679.00" y1="150.50" x2="680.80" y2="150.50" stroke="#666" stroke-width="1"/>
<line x1="655.20" y1="154.50" x2="658.30" y2="154.50" stroke="#555" stroke-width="1"/>
<line x1="679.00" y1="154.50" x2="682.00" y2="154.50" stroke="#555" stroke-width="1"/>
<line x1="655.20" y1="157.50" x2="657.00" y2="157.50" stroke="#666" stroke-width="1"/>
<line x1="679.00" y1="157.50" x2="680.80" y2="157.50" stroke="#666" stroke-width="1"/>
<line x1="655.20" y1="161.50" x2="657.00" y2="161.50" stroke="#666" stroke-width="1"/>
<line x1="679.00" y1="161.50" x2="680.80" y2="161.50" stroke="#666" stroke-width="1"/>
<line x1="655.20" y1="165.50" x2="657.00" y2="165.50" stroke="#666" stroke-width="1"/>
<line x1="679.00" y1="165.50" x2="680.80" y2="165.50" stroke="#666" stroke-width="1"/>
<line x1="655.20" y1="169.50" x2="658.30" y2="169.50" stroke="#555" stroke-width="1"/>
<line x1="679.00" y1="169.50" x2="682.00" y2="169.50" stroke="#555" stroke-width="1"/>
<line x1="655.20" y1="172.50" x2="657.00" y2="172.50" stroke="#666" stroke-width="1"/>
<line x1="679.00" y1="172.50" x2="680.80" y2="172.50" stroke="#666" stroke-width="1"/>
<line x1="655.20" y1="176.50" x2="657.00" y2="176.50" stroke="#666" stroke-width="1"/>
<line x1="679.00" y1="176.50" x2="680.80" y2="176.50" stroke="#666" stroke-width="1"/>
<line x1="655.20" y1="180.50" x2="657.00" y2="180.50" stroke="#666" stroke-width="1"/>
<line x1="679.00" y1="180.50" x2="680.80" y2="180.50" stroke="#666" stroke-width="1"/>
<line x1="655.20" y1="184.50" x2="658.30" y2="184.50" stroke="#555" stroke-width="1"/>
<line x1="679.00" y1="184.50" x2="682.00" y2="184.50" stroke="#555" stroke-width="1"/>
<line x1="655.20" y1="188.50" x2="657.00" y2="188.50" stroke="#666" stroke-width="1"/>
<line x1="679.00" y1="188.50" x2="680.80" y2="188.50" stroke="#666" stroke-width="1"/>
<line x1="655.20" y1="191.50" x2="657.00" y2="191.50" stroke="#666" stroke-width="1"/>
<line x1="679.00" y1="191.50" x2="680.80" y2="191.50" stroke="#666" stroke-width="1"/>
<line x1="655.20" y1="195.50" x2="657.00" y2="195.50" stroke="#666" stroke-width="1"/>
<line x1="679.00" y1="195.50" x2="680.80" y2="195.50" stroke="#666" stroke-width="1"/>
<line x1="655.20" y1="199.50" x2="658.30" y2="199.50" stroke="#555" stroke-width="1"/>
<line x1="679.00" y1="199.50" x2="682.00" y2="199.50" stroke="#555" stroke-width="1"/>
<text x="658.80" y="50.98" font-size="8.4" fill="#e84848" stroke="#e84848" stroke-width="0.22" textLength="15.30" lengthAdjust="spacingAndGlyphs">0.20</text>
<text x="682.60" y="50.98" font-size="8.4" fill="#38b038" stroke="#38b038" stroke-width="0.22" textLength="15.30" lengthAdjust="spacingAndGlyphs">0.10</text>
<text x="658.80" y="66.13" font-size="8.4" fill="#e84848" stroke="#e84848" stroke-width="0.22" textLength="15.30" lengthAdjust="spacingAndGlyphs">0.10</text>
<text x="682.60" y="66.13" font-size="8.4" fill="#38b038" stroke="#38b038" stroke-width="0.22" textLength="15.30" lengthAdjust="spacingAndGlyphs">0.00</text>
<text x="658.80" y="81.28" font-size="8.4" fill="#e84848" stroke="#e84848" stroke-width="0.22" textLength="15.30" lengthAdjust="spacingAndGlyphs">0.00</text>
<text x="682.60" y="81.28" font-size="8.4" fill="#38b038" stroke="#38b038" stroke-width="0.22" textLength="17.60" lengthAdjust="spacingAndGlyphs">-0.10</text>
<text x="658.80" y="96.43" font-size="8.4" fill="#e84848" stroke="#e84848" stroke-width="0.22" textLength="17.60" lengthAdjust="spacingAndGlyphs">-0.10</text>
<text x="682.60" y="96.43" font-size="8.4" fill="#38b038" stroke="#38b038" stroke-width="0.22" textLength="17.60" lengthAdjust="spacingAndGlyphs">-0.20</text>
<text x="658.80" y="111.58" font-size="8.4" fill="#e84848" stroke="#e84848" stroke-width="0.22" textLength="17.60" lengthAdjust="spacingAndGlyphs">-0.20</text>
<text x="682.60" y="111.58" font-size="8.4" fill="#38b038" stroke="#38b038" stroke-width="0.22" textLength="17.60" lengthAdjust="spacingAndGlyphs">-0.30</text>
<text x="658.80" y="126.73" font-size="8.4" fill="#e84848" stroke="#e84848" stroke-width="0.22" textLength="17.60" lengthAdjust="spacingAndGlyphs">-0.30</text>
<text x="682.60" y="126.73" font-size="8.4" fill="#38b038" stroke="#38b038" stroke-width="0.22" textLength="17.60" lengthAdjust="spacingAndGlyphs">-0.40</text>
<text x="658.80" y="141.88" font-size="8.4" fill="#e84848" stroke="#e84848" stroke-width="0.22" textLength="17.60" lengthAdjust="spacingAndGlyphs">-0.40</text>
<text x="682.60" y="141.88" font-size="8.4" fill="#38b038" stroke="#38b038" stroke-width="0.22" textLength="17.60" lengthAdjust="spacingAndGlyphs">-0.50</text>
<text x="658.80" y="157.03" font-size="8.4" fill="#e84848" stroke="#e84848" stroke-width="0.22" textLength="17.60" lengthAdjust="spacingAndGlyphs">-0.50</text>
<text x="682.60" y="157.03" font-size="8.4" fill="#38b038" stroke="#38b038" stroke-width="0.22" textLength="17.60" lengthAdjust="spacingAndGlyphs">-0.60</text>
<text x="658.80" y="172.18" font-size="8.4" fill="#e84848" stroke="#e84848" stroke-width="0.22" textLength="17.60" lengthAdjust="spacingAndGlyphs">-0.60</text>
<text x="682.60" y="172.18" font-size="8.4" fill="#38b038" stroke="#38b038" stroke-width="0.22" textLength="17.60" lengthAdjust="spacingAndGlyphs">-0.70</text>
<text x="658.80" y="187.33" font-size="8.4" fill="#e84848" stroke="#e84848" stroke-width="0.22" textLength="17.60" lengthAdjust="spacingAndGlyphs">-0.70</text>
<text x="682.60" y="187.33" font-size="8.4" fill="#38b038" stroke="#38b038" stroke-width="0.22" textLength="17.60" lengthAdjust="spacingAndGlyphs">-0.80</text>
<text x="658.80" y="202.48" font-size="8.4" fill="#e84848" stroke="#e84848" stroke-width="0.22" textLength="17.60" lengthAdjust="spacingAndGlyphs">-0.80</text>
<text x="682.60" y="202.48" font-size="8.4" fill="#38b038" stroke="#38b038" stroke-width="0.22" textLength="17.60" lengthAdjust="spacingAndGlyphs">-0.90</text>
<text x="697.20" y="126.20" font-size="7.6" fill="#3a3a3a" stroke="#3a3a3a" stroke-width="0.22" textLength="25.00" lengthAdjust="spacingAndGlyphs" transform="rotate(90 709.70 123.50)"><tspan dy="0.61" font-size="9.12" stroke-width="0.40">温度</tspan><tspan dy="-0.61"> °C</tspan></text>
<rect x="718.70" y="45.30" width="68.10" height="77.50" fill="url(#leg)"/>
<line x1="718.70" y1="122.60" x2="786.80" y2="122.60" stroke="#9a9a9a" stroke-width="0.8"/>
<rect x="754.80" y="46.80" width="22.70" height="11.90" fill="#9a9a9a"/>
<polyline points="755.50,56.70 761.50,48.80 767.50,56.70 773.50,48.80 777.50,51.80" fill="none" stroke="#c8e8e8" stroke-width="1"/>
<text x="727.60" y="55.45" font-size="7.6" fill="#3a3a3a" stroke="#3a3a3a" stroke-width="0.22" textLength="22.70" lengthAdjust="spacingAndGlyphs"><tspan dy="0.61" font-size="9.12" stroke-width="0.40">滤波值</tspan></text>
<rect x="754.80" y="62.20" width="22.70" height="11.80" fill="#000"/>
<polyline points="755.50,72.00 761.50,64.20 767.50,72.00 773.50,64.20 777.50,67.20" fill="none" stroke="#c01818" stroke-width="1"/>
<text x="727.60" y="70.80" font-size="7.6" fill="#3a3a3a" stroke="#3a3a3a" stroke-width="0.22" textLength="20.00" lengthAdjust="spacingAndGlyphs"><tspan dy="0.61" font-size="9.12" stroke-width="0.40">温度</tspan><tspan dy="-0.61">1</tspan></text>
<rect x="754.80" y="78.00" width="22.70" height="12.00" fill="#000"/>
<polyline points="755.50,88.00 761.50,80.00 767.50,88.00 773.50,80.00 777.50,83.00" fill="none" stroke="#10b010" stroke-width="1"/>
<text x="727.60" y="86.70" font-size="7.6" fill="#3a3a3a" stroke="#3a3a3a" stroke-width="0.22" textLength="20.00" lengthAdjust="spacingAndGlyphs"><tspan dy="0.61" font-size="9.12" stroke-width="0.40">温度</tspan><tspan dy="-0.61">2</tspan></text>
<rect x="754.80" y="93.60" width="22.70" height="11.40" fill="#9a9a9a"/>
<polyline points="755.50,103.00 761.50,95.60 767.50,103.00 773.50,95.60 777.50,98.60" fill="none" stroke="#e0a0d0" stroke-width="1"/>
<text x="727.60" y="102.00" font-size="7.6" fill="#3a3a3a" stroke="#3a3a3a" stroke-width="0.22" textLength="22.70" lengthAdjust="spacingAndGlyphs"><tspan dy="0.61" font-size="9.12" stroke-width="0.40">补偿值</tspan></text>
<rect x="754.80" y="109.00" width="22.70" height="12.00" fill="#000"/>
<polyline points="755.50,119.00 761.50,111.00 767.50,119.00 773.50,111.00 777.50,114.00" fill="none" stroke="#c8b41e" stroke-width="1"/>
<text x="727.60" y="117.70" font-size="7.6" fill="#3a3a3a" stroke="#3a3a3a" stroke-width="0.22" textLength="22.70" lengthAdjust="spacingAndGlyphs"><tspan dy="0.61" font-size="9.12" stroke-width="0.40">测量值</tspan></text>
<rect x="719.70" y="126.60" width="68.00" height="14.30" fill="#000"/>
<text x="727.00" y="137.35" font-size="10" fill="#e8b420" stroke="#e8b420" stroke-width="0.22" font-weight="bold" textLength="53.00" lengthAdjust="spacingAndGlyphs">00.0000015</text>
<text x="723.70" y="154.00" font-size="7.6" fill="#3a3a3a" stroke="#3a3a3a" stroke-width="0.22" textLength="21.30" lengthAdjust="spacingAndGlyphs"><tspan dy="0.61" font-size="9.12" stroke-width="0.40">温度</tspan><tspan dy="-0.61">1:</tspan></text>
<text x="754.00" y="154.28" font-size="8.4" fill="#e04040" stroke="#e04040" stroke-width="0.22" textLength="16.40" lengthAdjust="spacingAndGlyphs">NaN</text>
<text x="776.30" y="154.28" font-size="8.4" fill="#3a3a3a" stroke="#3a3a3a" stroke-width="0.22" textLength="7.10" lengthAdjust="spacingAndGlyphs">°C</text>
<text x="723.70" y="167.00" font-size="7.6" fill="#3a3a3a" stroke="#3a3a3a" stroke-width="0.22" textLength="21.30" lengthAdjust="spacingAndGlyphs"><tspan dy="0.61" font-size="9.12" stroke-width="0.40">温度</tspan><tspan dy="-0.61">2:</tspan></text>
<text x="754.00" y="167.28" font-size="8.4" fill="#30a830" stroke="#30a830" stroke-width="0.22" textLength="16.40" lengthAdjust="spacingAndGlyphs">NaN</text>
<text x="776.30" y="167.28" font-size="8.4" fill="#3a3a3a" stroke="#3a3a3a" stroke-width="0.22" textLength="7.10" lengthAdjust="spacingAndGlyphs">°C</text>
<text x="735.00" y="182.53" font-size="10.5" fill="#333" stroke="#333" stroke-width="0.22" textLength="40.40" lengthAdjust="spacingAndGlyphs">0.00 SPS</text>
<rect x="736.70" y="188.70" width="48.60" height="17.10" fill="url(#btn)" stroke="#8c8c8c" stroke-width="0.9" rx="2"/>
<text x="746.25" y="200.02" font-size="7.8" fill="#222" stroke="#222" stroke-width="0.22" textLength="29.50" lengthAdjust="spacingAndGlyphs"><tspan dy="0.62" font-size="9.36" stroke-width="0.40">暂停显示</tspan></text>
<text x="710.00" y="207.50" font-size="7.6" fill="#3a3a3a" stroke="#3a3a3a" stroke-width="0.22" textLength="14.90" lengthAdjust="spacingAndGlyphs"><tspan dy="0.61" font-size="9.12" stroke-width="0.40">导入</tspan></text>
<rect x="704.00" y="213.60" width="27.50" height="16.40" fill="url(#btn)" stroke="#8c8c8c" stroke-width="0.9" rx="2"/>
<path d="M711 218.6 h4.2 l1.2 1.4 h5.8 v6.6 h-11.2 z" fill="#f4ee00" stroke="#505018" stroke-width="0.7"/>
<path d="M711.4 226.8 l2.6 -4.4 h11.6 l-3 4.4 z" fill="#5a5a5a" stroke="#303030" stroke-width="0.6"/>
<rect x="736.70" y="212.40" width="48.60" height="17.60" fill="url(#btn)" stroke="#8c8c8c" stroke-width="0.9" rx="2"/>
<text x="746.25" y="223.97" font-size="7.8" fill="#222" stroke="#222" stroke-width="0.22" textLength="29.50" lengthAdjust="spacingAndGlyphs"><tspan dy="0.62" font-size="9.36" stroke-width="0.40">清除波形</tspan></text>
<text x="168.00" y="241.20" font-size="7.6" fill="#3a3a3a" stroke="#3a3a3a" stroke-width="0.22" textLength="10.00" lengthAdjust="spacingAndGlyphs">Y<tspan dy="0.61" font-size="9.12" stroke-width="0.40">轴</tspan></text>
<rect x="182.00" y="232.50" width="12.00" height="12.00" fill="#fff" stroke="#505050" stroke-width="0.9"/>
<text x="196.00" y="241.20" font-size="7.6" fill="#3a3a3a" stroke="#3a3a3a" stroke-width="0.22" textLength="15.00" lengthAdjust="spacingAndGlyphs"><tspan dy="0.61" font-size="9.12" stroke-width="0.40">自动</tspan></text>
<text x="221.00" y="240.70" font-size="7.6" fill="#3a3a3a" stroke="#3a3a3a" stroke-width="0.22" textLength="15.00" lengthAdjust="spacingAndGlyphs"><tspan dy="0.61" font-size="9.12" stroke-width="0.40">上限</tspan></text>
<rect x="238.00" y="231.00" width="60.00" height="14.00" fill="#fff" stroke="#b8b8b8" stroke-width="0.8"/>
<rect x="289.50" y="232.00" width="7.50" height="6.00" fill="#eef0f6" stroke="#c0c4d0" stroke-width="0.6"/>
<rect x="289.50" y="238.00" width="7.50" height="6.00" fill="#eef0f6" stroke="#c0c4d0" stroke-width="0.6"/>
<path d="M291.65 236.10L294.85 236.10L293.25 234.40Z M291.65 240.18L294.85 240.18L293.25 241.88Z" fill="#5a6ab0"/>
<text x="240.50" y="240.98" font-size="8.4" fill="#222" stroke="#222" stroke-width="0.22" textLength="42.50" lengthAdjust="spacingAndGlyphs">0.00000270</text>
<text x="305.00" y="240.70" font-size="7.6" fill="#3a3a3a" stroke="#3a3a3a" stroke-width="0.22" textLength="15.00" lengthAdjust="spacingAndGlyphs"><tspan dy="0.61" font-size="9.12" stroke-width="0.40">下限</tspan></text>
<rect x="322.00" y="231.00" width="60.00" height="14.00" fill="#fff" stroke="#b8b8b8" stroke-width="0.8"/>
<rect x="373.50" y="232.00" width="7.50" height="6.00" fill="#eef0f6" stroke="#c0c4d0" stroke-width="0.6"/>
<rect x="373.50" y="238.00" width="7.50" height="6.00" fill="#eef0f6" stroke="#c0c4d0" stroke-width="0.6"/>
<path d="M375.65 236.10L378.85 236.10L377.25 234.40Z M375.65 240.18L378.85 240.18L377.25 241.88Z" fill="#5a6ab0"/>
<text x="324.50" y="240.98" font-size="8.4" fill="#222" stroke="#222" stroke-width="0.22" textLength="42.50" lengthAdjust="spacingAndGlyphs">0.00000110</text>
<text x="409.00" y="238.70" font-size="7.6" fill="#3a3a3a" stroke="#3a3a3a" stroke-width="0.22" textLength="16.00" lengthAdjust="spacingAndGlyphs"><tspan dy="0.61" font-size="9.12" stroke-width="0.40">时间</tspan></text>
<rect x="452.00" y="231.50" width="120.00" height="9.00" fill="#ececec"/>
<path d="M455.5 236.5 l2.5 -2 v4 z M569 236.5 l-2.5 -2 v4 z" fill="#303030"/>
<rect x="512.00" y="232.50" width="3.50" height="7.50" fill="#f4f4f4" stroke="#909090" stroke-width="0.6"/>
<line x1="513.50" y1="234.00" x2="513.50" y2="239.00" stroke="#707070" stroke-width="1"/>
<line x1="514.50" y1="234.00" x2="514.50" y2="239.00" stroke="#707070" stroke-width="1"/>
<rect x="575.80" y="230.50" width="24.70" height="12.00" fill="#fff" stroke="#b0b0b0" stroke-width="0.8"/>
<text x="585.95" y="239.48" font-size="8.4" fill="#222" stroke="#222" stroke-width="0.22" textLength="4.30" lengthAdjust="spacingAndGlyphs">0</text>
<text x="615.00" y="238.70" font-size="7.6" fill="#3a3a3a" stroke="#3a3a3a" stroke-width="0.22" textLength="33.50" lengthAdjust="spacingAndGlyphs"><tspan dy="0.61" font-size="9.12" stroke-width="0.40">最大偏差</tspan><tspan dy="-0.61">:</tspan></text>
<text x="651.50" y="238.98" font-size="8.4" fill="#3a3a3a" stroke="#3a3a3a" stroke-width="0.22" textLength="25.00" lengthAdjust="spacingAndGlyphs">333333</text>
<text x="681.80" y="238.98" font-size="8.4" fill="#3a3a3a" stroke="#3a3a3a" stroke-width="0.22" textLength="15.90" lengthAdjust="spacingAndGlyphs">PPM</text>
<text x="174.50" y="261.12" font-size="10.2" fill="#4a98ee" stroke="#4a98ee" stroke-width="0.22" textLength="44.30" lengthAdjust="spacingAndGlyphs"><tspan dy="0.82" font-size="12.24" stroke-width="0.51">线性公式</tspan><tspan dy="-0.82">:</tspan></text>
<text x="174.50" y="284.42" font-size="10.2" fill="#4a98ee" stroke="#4a98ee" stroke-width="0.22" textLength="44.30" lengthAdjust="spacingAndGlyphs"><tspan dy="0.82" font-size="12.24" stroke-width="0.51">二次公式</tspan><tspan dy="-0.82">:</tspan></text>
<rect x="222.00" y="250.50" width="189.50" height="14.50" fill="#000"/>
<text x="224.00" y="260.69" font-size="9" fill="#e8a010" stroke="#e8a010" stroke-width="0.22" textLength="11.00" lengthAdjust="spacingAndGlyphs">y=</text>
<text x="240.00" y="260.55" font-size="8.6" fill="#d8c038" stroke="#d8c038" stroke-width="0.22" textLength="43.00" lengthAdjust="spacingAndGlyphs">0.00000E+0</text>
<text x="285.80" y="260.77" font-size="9.2" fill="#e8a010" stroke="#e8a010" stroke-width="0.22" textLength="13.20" lengthAdjust="spacingAndGlyphs">(t -</text>
<text x="304.00" y="260.55" font-size="8.6" fill="#d8c038" stroke="#d8c038" stroke-width="0.22" textLength="16.00" lengthAdjust="spacingAndGlyphs">0.00</text>
<text x="321.50" y="260.77" font-size="9.2" fill="#e8a010" stroke="#e8a010" stroke-width="0.22" textLength="3.00" lengthAdjust="spacingAndGlyphs">)</text>
<text x="331.00" y="260.77" font-size="9.2" fill="#e8a010" stroke="#e8a010" stroke-width="0.22" textLength="4.50" lengthAdjust="spacingAndGlyphs">+</text>
<text x="339.70" y="260.98" font-size="9.8" fill="#f0c000" stroke="#f0c000" stroke-width="0.22" font-weight="bold" textLength="47.50" lengthAdjust="spacingAndGlyphs">0.00000000</text>
<rect x="222.00" y="268.30" width="277.50" height="26.30" fill="#000"/>
<text x="224.00" y="278.69" font-size="9" fill="#e8a010" stroke="#e8a010" stroke-width="0.22" textLength="11.00" lengthAdjust="spacingAndGlyphs">y=</text>
<text x="240.00" y="278.55" font-size="8.6" fill="#d8c038" stroke="#d8c038" stroke-width="0.22" textLength="43.00" lengthAdjust="spacingAndGlyphs">0.00000E+0</text>
<text x="285.80" y="278.77" font-size="9.2" fill="#e8a010" stroke="#e8a010" stroke-width="0.22" textLength="13.20" lengthAdjust="spacingAndGlyphs">(t -</text>
<text x="304.00" y="278.55" font-size="8.6" fill="#d8c038" stroke="#d8c038" stroke-width="0.22" textLength="16.00" lengthAdjust="spacingAndGlyphs">0.00</text>
<text x="321.50" y="278.77" font-size="9.2" fill="#e8a010" stroke="#e8a010" stroke-width="0.22" textLength="3.50" lengthAdjust="spacingAndGlyphs">)</text>
<text x="325.80" y="273.93" font-size="6" fill="#e8a010" stroke="#e8a010" stroke-width="0.22" textLength="3.20" lengthAdjust="spacingAndGlyphs">2</text>
<text x="332.70" y="278.77" font-size="9.2" fill="#e8a010" stroke="#e8a010" stroke-width="0.22" textLength="5.30" lengthAdjust="spacingAndGlyphs">+</text>
<text x="338.00" y="278.55" font-size="8.6" fill="#d8c038" stroke="#d8c038" stroke-width="0.22" textLength="43.80" lengthAdjust="spacingAndGlyphs">0.00000E+0</text>
<text x="383.60" y="278.77" font-size="9.2" fill="#e8a010" stroke="#e8a010" stroke-width="0.22" textLength="11.70" lengthAdjust="spacingAndGlyphs">(t -</text>
<text x="402.00" y="278.55" font-size="8.6" fill="#d8c038" stroke="#d8c038" stroke-width="0.22" textLength="15.50" lengthAdjust="spacingAndGlyphs">0.00</text>
<text x="418.00" y="278.77" font-size="9.2" fill="#e8a010" stroke="#e8a010" stroke-width="0.22" textLength="3.20" lengthAdjust="spacingAndGlyphs">)</text>
<text x="424.60" y="278.77" font-size="9.2" fill="#e8a010" stroke="#e8a010" stroke-width="0.22" textLength="4.20" lengthAdjust="spacingAndGlyphs">+</text>
<text x="431.00" y="278.98" font-size="9.8" fill="#f0c000" stroke="#f0c000" stroke-width="0.22" font-weight="bold" textLength="47.60" lengthAdjust="spacingAndGlyphs">0.00000000</text>
<text x="223.80" y="289.57" font-size="9.2" fill="#e8a010" stroke="#e8a010" stroke-width="0.22" textLength="11.20" lengthAdjust="spacingAndGlyphs">β =</text>
<text x="260.00" y="289.35" font-size="8.6" fill="#d8c038" stroke="#d8c038" stroke-width="0.22" textLength="10.60" lengthAdjust="spacingAndGlyphs">0.0</text>
<text x="274.30" y="289.42" font-size="8.8" fill="#e8a010" stroke="#e8a010" stroke-width="0.22" textLength="26.20" lengthAdjust="spacingAndGlyphs">PPM/°C</text>
<text x="301.00" y="285.13" font-size="6" fill="#e8a010" stroke="#e8a010" stroke-width="0.22" textLength="3.40" lengthAdjust="spacingAndGlyphs">2</text>
<text x="318.90" y="289.57" font-size="9.2" fill="#e8a010" stroke="#e8a010" stroke-width="0.22" textLength="12.50" lengthAdjust="spacingAndGlyphs">α =</text>
<text x="360.00" y="289.35" font-size="8.6" fill="#d8c038" stroke="#d8c038" stroke-width="0.22" textLength="4.40" lengthAdjust="spacingAndGlyphs">0</text>
<text x="368.50" y="289.42" font-size="8.8" fill="#e8a010" stroke="#e8a010" stroke-width="0.22" textLength="27.90" lengthAdjust="spacingAndGlyphs">PPM/°C</text>
<text x="418.75" y="259.70" font-size="7.6" fill="#3a3a3a" stroke="#3a3a3a" stroke-width="0.22" textLength="32.25" lengthAdjust="spacingAndGlyphs"><tspan dy="0.61" font-size="9.12" stroke-width="0.40">参考温度</tspan><tspan dy="-0.61">:</tspan></text>
<rect x="453.00" y="249.50" width="34.50" height="15.00" fill="#fff" stroke="#b8b8b8" stroke-width="0.8"/>
<rect x="479.00" y="250.50" width="7.50" height="6.50" fill="#eef0f6" stroke="#c0c4d0" stroke-width="0.6"/>
<rect x="479.00" y="257.00" width="7.50" height="6.50" fill="#eef0f6" stroke="#c0c4d0" stroke-width="0.6"/>
<path d="M481.15 254.90L484.35 254.90L482.75 253.20Z M481.15 259.40L484.35 259.40L482.75 261.10Z" fill="#5a6ab0"/>
<text x="455.50" y="259.98" font-size="8.4" fill="#222" stroke="#222" stroke-width="0.22" textLength="20.50" lengthAdjust="spacingAndGlyphs">23.00</text>
<text x="492.50" y="259.98" font-size="8.4" fill="#3a3a3a" stroke="#3a3a3a" stroke-width="0.22" textLength="7.50" lengthAdjust="spacingAndGlyphs">°C</text>
<rect x="510.5" y="250.5" width="138" height="45.5" fill="none" stroke="#b4b4b4" stroke-width="0.9" rx="2"/>
<rect x="554.00" y="246.00" width="51.00" height="8.00" fill="#e9e9e9"/>
<text x="557.00" y="253.20" font-size="7.6" fill="#3a3a3a" stroke="#3a3a3a" stroke-width="0.22" textLength="45.00" lengthAdjust="spacingAndGlyphs"><tspan dy="0.61" font-size="9.12" stroke-width="0.40">选择数据范围</tspan></text>
<text x="513.00" y="267.70" font-size="7.6" fill="#a8a8a8" stroke="#a8a8a8" stroke-width="0.22" textLength="18.00" lengthAdjust="spacingAndGlyphs"><tspan dy="0.61" font-size="9.12" stroke-width="0.40">开始</tspan><tspan dy="-0.61">:</tspan></text>
<rect x="532.50" y="258.00" width="41.50" height="14.00" fill="#fafafa" stroke="#b8b8b8" stroke-width="0.8"/>
<rect x="565.50" y="259.00" width="7.50" height="6.00" fill="#eef0f6" stroke="#c0c4d0" stroke-width="0.6"/>
<rect x="565.50" y="265.00" width="7.50" height="6.00" fill="#eef0f6" stroke="#c0c4d0" stroke-width="0.6"/>
<path d="M567.65 263.10L570.85 263.10L569.25 261.40Z M567.65 267.18L570.85 267.18L569.25 268.88Z" fill="#c8c8d8"/>
<text x="535.00" y="267.98" font-size="8.4" fill="#a8a8a8" stroke="#a8a8a8" stroke-width="0.22" textLength="4.50" lengthAdjust="spacingAndGlyphs">0</text>
<text x="583.00" y="267.70" font-size="7.6" fill="#a8a8a8" stroke="#a8a8a8" stroke-width="0.22" textLength="18.00" lengthAdjust="spacingAndGlyphs"><tspan dy="0.61" font-size="9.12" stroke-width="0.40">结束</tspan><tspan dy="-0.61">:</tspan></text>
<rect x="603.00" y="258.00" width="41.50" height="14.00" fill="#fafafa" stroke="#b8b8b8" stroke-width="0.8"/>
<rect x="636.00" y="259.00" width="7.50" height="6.00" fill="#eef0f6" stroke="#c0c4d0" stroke-width="0.6"/>
<rect x="636.00" y="265.00" width="7.50" height="6.00" fill="#eef0f6" stroke="#c0c4d0" stroke-width="0.6"/>
<path d="M638.15 263.10L641.35 263.10L639.75 261.40Z M638.15 267.18L641.35 267.18L639.75 268.88Z" fill="#c8c8d8"/>
<text x="605.50" y="267.98" font-size="8.4" fill="#a8a8a8" stroke="#a8a8a8" stroke-width="0.22" textLength="8.50" lengthAdjust="spacingAndGlyphs">38</text>
<text x="513.00" y="287.70" font-size="7.6" fill="#3a3a3a" stroke="#3a3a3a" stroke-width="0.22" textLength="15.00" lengthAdjust="spacingAndGlyphs"><tspan dy="0.61" font-size="9.12" stroke-width="0.40">自动</tspan></text>
<rect x="532.00" y="280.00" width="21.75" height="9.50" fill="#d4d4d4" stroke="#8a8a8a" stroke-width="0.7"/>
<rect x="542.22" y="280.40" width="11.13" height="8.70" fill="#7c7c7c"/>
<line x1="536.35" y1="280.00" x2="536.35" y2="289.50" stroke="#a0a0a0" stroke-width="0.6"/>
<line x1="539.83" y1="280.00" x2="539.83" y2="289.50" stroke="#a0a0a0" stroke-width="0.6"/>
<text x="558.00" y="287.70" font-size="7.6" fill="#3a3a3a" stroke="#3a3a3a" stroke-width="0.22" textLength="15.00" lengthAdjust="spacingAndGlyphs"><tspan dy="0.61" font-size="9.12" stroke-width="0.40">手动</tspan></text>
<text x="583.00" y="287.70" font-size="7.6" fill="#3a3a3a" stroke="#3a3a3a" stroke-width="0.22" textLength="15.00" lengthAdjust="spacingAndGlyphs"><tspan dy="0.61" font-size="9.12" stroke-width="0.40">自动</tspan></text>
<rect x="602.00" y="280.00" width="22.00" height="9.50" fill="#d4d4d4" stroke="#8a8a8a" stroke-width="0.7"/>
<rect x="612.34" y="280.40" width="11.26" height="8.70" fill="#7c7c7c"/>
<line x1="606.40" y1="280.00" x2="606.40" y2="289.50" stroke="#a0a0a0" stroke-width="0.6"/>
<line x1="609.92" y1="280.00" x2="609.92" y2="289.50" stroke="#a0a0a0" stroke-width="0.6"/>
<text x="628.00" y="287.70" font-size="7.6" fill="#3a3a3a" stroke="#3a3a3a" stroke-width="0.22" textLength="15.00" lengthAdjust="spacingAndGlyphs"><tspan dy="0.61" font-size="9.12" stroke-width="0.40">手动</tspan></text>
<rect x="658.90" y="245.90" width="52.70" height="16.90" fill="url(#btn)" stroke="#8c8c8c" stroke-width="0.9" rx="2"/>
<text x="663.25" y="257.05" font-size="7.6" fill="#222" stroke="#222" stroke-width="0.22" textLength="44.00" lengthAdjust="spacingAndGlyphs"><tspan dy="0.61" font-size="9.12" stroke-width="0.40">剔除异常数据</tspan></text>
<text x="660.00" y="277.30" font-size="7.6" fill="#3a3a3a" stroke="#3a3a3a" stroke-width="0.22" textLength="48.00" lengthAdjust="spacingAndGlyphs"><tspan dy="0.61" font-size="9.12" stroke-width="0.40">异常数据阈值</tspan><tspan dy="-0.61">:</tspan></text>
<rect x="659.30" y="281.70" width="38.40" height="14.30" fill="#fff" stroke="#b8b8b8" stroke-width="0.8"/>
<rect x="689.20" y="282.70" width="7.50" height="6.15" fill="#eef0f6" stroke="#c0c4d0" stroke-width="0.6"/>
<rect x="689.20" y="288.85" width="7.50" height="6.15" fill="#eef0f6" stroke="#c0c4d0" stroke-width="0.6"/>
<path d="M691.35 286.89L694.55 286.89L692.95 285.19Z M691.35 291.10L694.55 291.10L692.95 292.80Z" fill="#5a6ab0"/>
<text x="661.80" y="291.83" font-size="8.4" fill="#222" stroke="#222" stroke-width="0.22" textLength="24.20" lengthAdjust="spacingAndGlyphs">10.000</text>
<text x="700.00" y="291.98" font-size="8.4" fill="#3a3a3a" stroke="#3a3a3a" stroke-width="0.22" textLength="16.00" lengthAdjust="spacingAndGlyphs">PPM</text>
<rect x="723.00" y="240.00" width="16.00" height="12.00" fill="#fbfbfb" stroke="#8a8a8a" stroke-width="0.8"/>
<rect x="735.50" y="240.60" width="3.00" height="10.80" fill="#2a6a2a"/>
<line x1="736.40" y1="241.00" x2="736.40" y2="251.00" stroke="#5aa05a" stroke-width="0.8"/>
<text x="745.00" y="248.70" font-size="7.6" fill="#3a3a3a" stroke="#3a3a3a" stroke-width="0.22" textLength="9.50" lengthAdjust="spacingAndGlyphs"><tspan dy="0.61" font-size="9.12" stroke-width="0.40">温补</tspan></text>
<text x="757.00" y="248.84" font-size="8" fill="#3a3a3a" stroke="#3a3a3a" stroke-width="0.22" textLength="20.00" lengthAdjust="spacingAndGlyphs">OFF</text>
<rect x="723.00" y="262.80" width="16.00" height="11.60" fill="#fbfbfb" stroke="#8a8a8a" stroke-width="0.8"/>
<rect x="735.50" y="263.40" width="3.00" height="10.40" fill="#2a6a2a"/>
<line x1="736.40" y1="263.80" x2="736.40" y2="273.40" stroke="#5aa05a" stroke-width="0.8"/>
<text x="745.00" y="271.20" font-size="7.6" fill="#3a3a3a" stroke="#3a3a3a" stroke-width="0.22" textLength="9.50" lengthAdjust="spacingAndGlyphs"><tspan dy="0.61" font-size="9.12" stroke-width="0.40">滤波</tspan></text>
<text x="757.00" y="271.34" font-size="8" fill="#3a3a3a" stroke="#3a3a3a" stroke-width="0.22" textLength="20.00" lengthAdjust="spacingAndGlyphs">OFF</text>
<rect x="723.60" y="281.70" width="26.40" height="14.30" fill="#fff" stroke="#b8b8b8" stroke-width="0.8"/>
<rect x="741.50" y="282.70" width="7.50" height="6.15" fill="#eef0f6" stroke="#c0c4d0" stroke-width="0.6"/>
<rect x="741.50" y="288.85" width="7.50" height="6.15" fill="#eef0f6" stroke="#c0c4d0" stroke-width="0.6"/>
<path d="M743.65 286.89L746.85 286.89L745.25 285.19Z M743.65 291.10L746.85 291.10L745.25 292.80Z" fill="#5a6ab0"/>
<text x="726.10" y="291.83" font-size="8.4" fill="#222" stroke="#222" stroke-width="0.22" textLength="8.90" lengthAdjust="spacingAndGlyphs">10</text>
<text x="752.00" y="291.70" font-size="7.6" fill="#3a3a3a" stroke="#3a3a3a" stroke-width="0.22" textLength="30.00" lengthAdjust="spacingAndGlyphs"><tspan dy="0.61" font-size="9.12" stroke-width="0.40">滤波点数</tspan></text>
<text x="221.60" y="304.70" font-size="7.6" fill="#3a3a3a" stroke="#3a3a3a" stroke-width="0.22" textLength="36.40" lengthAdjust="spacingAndGlyphs">0<tspan dy="0.61" font-size="9.12" stroke-width="0.40">漂点温度</tspan><tspan dy="-0.61">:</tspan></text>
<text x="269.00" y="304.98" font-size="8.4" fill="#3a3a3a" stroke="#3a3a3a" stroke-width="0.22" textLength="14.00" lengthAdjust="spacingAndGlyphs">0.00</text>
<text x="291.00" y="304.98" font-size="8.4" fill="#3a3a3a" stroke="#3a3a3a" stroke-width="0.22" textLength="6.50" lengthAdjust="spacingAndGlyphs">°C</text>
<text x="222.00" y="317.70" font-size="7.6" fill="#3a3a3a" stroke="#3a3a3a" stroke-width="0.22" textLength="16.00" lengthAdjust="spacingAndGlyphs"><tspan dy="0.61" font-size="9.12" stroke-width="0.40">温漂</tspan><tspan dy="-0.61">:</tspan></text>
<text x="245.00" y="317.98" font-size="8.4" fill="#3a3a3a" stroke="#3a3a3a" stroke-width="0.22" textLength="21.00" lengthAdjust="spacingAndGlyphs">0.000</text>
<text x="272.00" y="317.98" font-size="8.4" fill="#3a3a3a" stroke="#3a3a3a" stroke-width="0.22" textLength="26.00" lengthAdjust="spacingAndGlyphs">PPM/°C</text>
<text x="310.00" y="319.29" font-size="13.5" fill="#222" stroke="#222" stroke-width="0.22" font-weight="bold" textLength="50.00" lengthAdjust="spacingAndGlyphs"><tspan dy="1.08" font-size="16.20" stroke-width="1.21">温度特性</tspan></text>
<text x="372.00" y="304.70" font-size="7.6" fill="#3a3a3a" stroke="#3a3a3a" stroke-width="0.22" textLength="32.00" lengthAdjust="spacingAndGlyphs">0<tspan dy="0.61" font-size="9.12" stroke-width="0.40">漂点值</tspan><tspan dy="-0.61">:</tspan></text>
<text x="406.50" y="304.98" font-size="8.4" fill="#3a3a3a" stroke="#3a3a3a" stroke-width="0.22" textLength="31.50" lengthAdjust="spacingAndGlyphs">0.000000</text>
<text x="372.00" y="317.70" font-size="7.6" fill="#3a3a3a" stroke="#3a3a3a" stroke-width="0.22" textLength="34.00" lengthAdjust="spacingAndGlyphs"><tspan dy="0.61" font-size="9.12" stroke-width="0.40">温度</tspan><tspan dy="-0.61">1</tspan><tspan dy="0.61" font-size="9.12" stroke-width="0.40">拟合</tspan></text>
<rect x="410.00" y="310.00" width="20.40" height="9.60" fill="#14c8f0"/>
<rect x="410.00" y="310.00" width="9.50" height="9.60" fill="#f0a800"/>
<line x1="413.30" y1="310.00" x2="413.30" y2="319.60" stroke="#705000" stroke-width="0.6"/>
<line x1="416.50" y1="310.00" x2="416.50" y2="319.60" stroke="#705000" stroke-width="0.6"/>
<text x="434.00" y="317.70" font-size="7.6" fill="#3a3a3a" stroke="#3a3a3a" stroke-width="0.22" textLength="34.00" lengthAdjust="spacingAndGlyphs"><tspan dy="0.61" font-size="9.12" stroke-width="0.40">温度</tspan><tspan dy="-0.61">2</tspan><tspan dy="0.61" font-size="9.12" stroke-width="0.40">拟合</tspan></text>
<rect x="219.50" y="323.00" width="254.90" height="144.30" fill="#000"/>
<path d="M219.50 327.50H474.40M219.50 332.50H474.40M219.50 336.50H474.40M219.50 341.50H474.40M219.50 345.50H474.40M219.50 350.50H474.40M219.50 354.50H474.40M219.50 359.50H474.40M219.50 363.50H474.40M219.50 368.50H474.40M219.50 372.50H474.40M219.50 377.50H474.40M219.50 381.50H474.40M219.50 386.50H474.40M219.50 390.50H474.40M219.50 395.50H474.40M219.50 399.50H474.40M219.50 404.50H474.40M219.50 408.50H474.40M219.50 413.50H474.40M219.50 417.50H474.40M219.50 422.50H474.40M219.50 426.50H474.40M219.50 431.50H474.40M219.50 435.50H474.40M219.50 440.50H474.40M219.50 444.50H474.40M219.50 449.50H474.40M219.50 453.50H474.40M219.50 458.50H474.40M219.50 462.50H474.40" stroke="#073a07" stroke-width="1" fill="none"/>
<path d="M223.50 323.00V467.30M227.50 323.00V467.30M232.50 323.00V467.30M236.50 323.00V467.30M240.50 323.00V467.30M244.50 323.00V467.30M249.50 323.00V467.30M253.50 323.00V467.30M257.50 323.00V467.30M261.50 323.00V467.30M266.50 323.00V467.30M270.50 323.00V467.30M274.50 323.00V467.30M278.50 323.00V467.30M283.50 323.00V467.30M287.50 323.00V467.30M291.50 323.00V467.30M295.50 323.00V467.30M300.50 323.00V467.30M304.50 323.00V467.30M308.50 323.00V467.30M312.50 323.00V467.30M317.50 323.00V467.30M321.50 323.00V467.30M325.50 323.00V467.30M329.50 323.00V467.30M334.50 323.00V467.30M338.50 323.00V467.30M342.50 323.00V467.30M346.50 323.00V467.30M351.50 323.00V467.30M355.50 323.00V467.30M359.50 323.00V467.30M363.50 323.00V467.30M368.50 323.00V467.30M372.50 323.00V467.30M376.50 323.00V467.30M380.50 323.00V467.30M385.50 323.00V467.30M389.50 323.00V467.30M393.50 323.00V467.30M397.50 323.00V467.30M402.50 323.00V467.30M406.50 323.00V467.30M410.50 323.00V467.30M414.50 323.00V467.30M419.50 323.00V467.30M423.50 323.00V467.30M427.50 323.00V467.30M431.50 323.00V467.30M436.50 323.00V467.30M440.50 323.00V467.30M444.50 323.00V467.30M448.50 323.00V467.30M453.50 323.00V467.30M457.50 323.00V467.30M461.50 323.00V467.30M465.50 323.00V467.30M470.50 323.00V467.30" stroke="#073a07" stroke-width="1" fill="none"/>
<path d="M219.50 350.50H474.40M219.50 368.50H474.40M219.50 386.50H474.40M219.50 404.50H474.40M219.50 422.50H474.40M219.50 440.50H474.40" stroke="#0b5a0b" stroke-width="1" fill="none"/>
<path d="M261.50 323.00V467.30M304.50 323.00V467.30M346.50 323.00V467.30M389.50 323.00V467.30M431.50 323.00V467.30" stroke="#0b5a0b" stroke-width="1" fill="none"/>
<line x1="215.80" y1="323.50" x2="217.80" y2="323.50" stroke="#666" stroke-width="1"/>
<line x1="215.80" y1="327.50" x2="217.80" y2="327.50" stroke="#666" stroke-width="1"/>
<line x1="215.80" y1="332.50" x2="217.80" y2="332.50" stroke="#666" stroke-width="1"/>
<line x1="215.80" y1="336.50" x2="217.80" y2="336.50" stroke="#666" stroke-width="1"/>
<line x1="215.80" y1="341.50" x2="217.80" y2="341.50" stroke="#666" stroke-width="1"/>
<line x1="215.80" y1="345.50" x2="217.80" y2="345.50" stroke="#666" stroke-width="1"/>
<line x1="215.80" y1="350.50" x2="217.80" y2="350.50" stroke="#666" stroke-width="1"/>
<line x1="215.80" y1="354.50" x2="217.80" y2="354.50" stroke="#666" stroke-width="1"/>
<line x1="215.80" y1="359.50" x2="217.80" y2="359.50" stroke="#666" stroke-width="1"/>
<line x1="215.80" y1="363.50" x2="217.80" y2="363.50" stroke="#666" stroke-width="1"/>
<line x1="215.80" y1="368.50" x2="217.80" y2="368.50" stroke="#666" stroke-width="1"/>
<line x1="215.80" y1="372.50" x2="217.80" y2="372.50" stroke="#666" stroke-width="1"/>
<line x1="215.80" y1="377.50" x2="217.80" y2="377.50" stroke="#666" stroke-width="1"/>
<line x1="215.80" y1="381.50" x2="217.80" y2="381.50" stroke="#666" stroke-width="1"/>
<line x1="215.80" y1="386.50" x2="217.80" y2="386.50" stroke="#666" stroke-width="1"/>
<line x1="215.80" y1="390.50" x2="217.80" y2="390.50" stroke="#666" stroke-width="1"/>
<line x1="215.80" y1="395.50" x2="217.80" y2="395.50" stroke="#666" stroke-width="1"/>
<line x1="215.80" y1="399.50" x2="217.80" y2="399.50" stroke="#666" stroke-width="1"/>
<line x1="215.80" y1="404.50" x2="217.80" y2="404.50" stroke="#666" stroke-width="1"/>
<line x1="215.80" y1="408.50" x2="217.80" y2="408.50" stroke="#666" stroke-width="1"/>
<line x1="215.80" y1="413.50" x2="217.80" y2="413.50" stroke="#666" stroke-width="1"/>
<line x1="215.80" y1="417.50" x2="217.80" y2="417.50" stroke="#666" stroke-width="1"/>
<line x1="215.80" y1="422.50" x2="217.80" y2="422.50" stroke="#666" stroke-width="1"/>
<line x1="215.80" y1="426.50" x2="217.80" y2="426.50" stroke="#666" stroke-width="1"/>
<line x1="215.80" y1="431.50" x2="217.80" y2="431.50" stroke="#666" stroke-width="1"/>
<line x1="215.80" y1="435.50" x2="217.80" y2="435.50" stroke="#666" stroke-width="1"/>
<line x1="215.80" y1="440.50" x2="217.80" y2="440.50" stroke="#666" stroke-width="1"/>
<line x1="215.80" y1="444.50" x2="217.80" y2="444.50" stroke="#666" stroke-width="1"/>
<line x1="215.80" y1="449.50" x2="217.80" y2="449.50" stroke="#666" stroke-width="1"/>
<line x1="215.80" y1="453.50" x2="217.80" y2="453.50" stroke="#666" stroke-width="1"/>
<line x1="215.80" y1="458.50" x2="217.80" y2="458.50" stroke="#666" stroke-width="1"/>
<line x1="215.80" y1="462.50" x2="217.80" y2="462.50" stroke="#666" stroke-width="1"/>
<line x1="215.80" y1="467.50" x2="217.80" y2="467.50" stroke="#666" stroke-width="1"/>
<text x="176.90" y="325.98" font-size="8.4" fill="#3a3a3a" stroke="#3a3a3a" stroke-width="0.22" textLength="36.10" lengthAdjust="spacingAndGlyphs">0.0000027</text>
<line x1="214.50" y1="323.50" x2="218.50" y2="323.50" stroke="#555" stroke-width="1"/>
<text x="176.90" y="353.04" font-size="8.4" fill="#3a3a3a" stroke="#3a3a3a" stroke-width="0.22" textLength="36.10" lengthAdjust="spacingAndGlyphs">0.0000024</text>
<line x1="214.50" y1="350.50" x2="218.50" y2="350.50" stroke="#555" stroke-width="1"/>
<text x="176.90" y="371.08" font-size="8.4" fill="#3a3a3a" stroke="#3a3a3a" stroke-width="0.22" textLength="36.10" lengthAdjust="spacingAndGlyphs">0.0000022</text>
<line x1="214.50" y1="368.50" x2="218.50" y2="368.50" stroke="#555" stroke-width="1"/>
<text x="176.90" y="389.11" font-size="8.4" fill="#3a3a3a" stroke="#3a3a3a" stroke-width="0.22" textLength="36.10" lengthAdjust="spacingAndGlyphs">0.0000020</text>
<line x1="214.50" y1="386.50" x2="218.50" y2="386.50" stroke="#555" stroke-width="1"/>
<text x="176.90" y="407.15" font-size="8.4" fill="#3a3a3a" stroke="#3a3a3a" stroke-width="0.22" textLength="36.10" lengthAdjust="spacingAndGlyphs">0.0000018</text>
<line x1="214.50" y1="404.50" x2="218.50" y2="404.50" stroke="#555" stroke-width="1"/>
<text x="176.90" y="425.19" font-size="8.4" fill="#3a3a3a" stroke="#3a3a3a" stroke-width="0.22" textLength="36.10" lengthAdjust="spacingAndGlyphs">0.0000016</text>
<line x1="214.50" y1="422.50" x2="218.50" y2="422.50" stroke="#555" stroke-width="1"/>
<text x="176.90" y="443.23" font-size="8.4" fill="#3a3a3a" stroke="#3a3a3a" stroke-width="0.22" textLength="36.10" lengthAdjust="spacingAndGlyphs">0.0000014</text>
<line x1="214.50" y1="440.50" x2="218.50" y2="440.50" stroke="#555" stroke-width="1"/>
<text x="176.90" y="470.28" font-size="8.4" fill="#3a3a3a" stroke="#3a3a3a" stroke-width="0.22" textLength="36.10" lengthAdjust="spacingAndGlyphs">0.0000011</text>
<line x1="214.50" y1="467.50" x2="218.50" y2="467.50" stroke="#555" stroke-width="1"/>
<text x="154.20" y="399.70" font-size="7.6" fill="#3a3a3a" stroke="#3a3a3a" stroke-width="0.22" textLength="33.00" lengthAdjust="spacingAndGlyphs" transform="rotate(-90 170.70 397.00)"><tspan dy="0.61" font-size="9.12" stroke-width="0.40">电压</tspan><tspan dy="-0.61"> (V)</tspan></text>
<line x1="219.50" y1="468.00" x2="219.50" y2="471.00" stroke="#555" stroke-width="1"/>
<text x="211.75" y="481.48" font-size="8.4" fill="#3a3a3a" stroke="#3a3a3a" stroke-width="0.22" textLength="15.50" lengthAdjust="spacingAndGlyphs">33.4</text>
<line x1="261.50" y1="468.00" x2="261.50" y2="471.00" stroke="#555" stroke-width="1"/>
<text x="254.23" y="481.48" font-size="8.4" fill="#3a3a3a" stroke="#3a3a3a" stroke-width="0.22" textLength="15.50" lengthAdjust="spacingAndGlyphs">33.6</text>
<line x1="304.50" y1="468.00" x2="304.50" y2="471.00" stroke="#555" stroke-width="1"/>
<text x="296.72" y="481.48" font-size="8.4" fill="#3a3a3a" stroke="#3a3a3a" stroke-width="0.22" textLength="15.50" lengthAdjust="spacingAndGlyphs">33.8</text>
<line x1="346.50" y1="468.00" x2="346.50" y2="471.00" stroke="#555" stroke-width="1"/>
<text x="342.65" y="481.48" font-size="8.4" fill="#3a3a3a" stroke="#3a3a3a" stroke-width="0.22" textLength="8.60" lengthAdjust="spacingAndGlyphs">34</text>
<line x1="389.50" y1="468.00" x2="389.50" y2="471.00" stroke="#555" stroke-width="1"/>
<text x="381.68" y="481.48" font-size="8.4" fill="#3a3a3a" stroke="#3a3a3a" stroke-width="0.22" textLength="15.50" lengthAdjust="spacingAndGlyphs">34.2</text>
<line x1="431.50" y1="468.00" x2="431.50" y2="471.00" stroke="#555" stroke-width="1"/>
<text x="424.17" y="481.48" font-size="8.4" fill="#3a3a3a" stroke="#3a3a3a" stroke-width="0.22" textLength="15.50" lengthAdjust="spacingAndGlyphs">34.4</text>
<line x1="474.50" y1="468.00" x2="474.50" y2="471.00" stroke="#555" stroke-width="1"/>
<text x="466.65" y="481.48" font-size="8.4" fill="#3a3a3a" stroke="#3a3a3a" stroke-width="0.22" textLength="15.50" lengthAdjust="spacingAndGlyphs">34.6</text>
<text x="329.40" y="492.00" font-size="7.6" fill="#3a3a3a" stroke="#3a3a3a" stroke-width="0.22" textLength="35.60" lengthAdjust="spacingAndGlyphs"><tspan dy="0.61" font-size="9.12" stroke-width="0.40">温度</tspan><tspan dy="-0.61"> ( °C )</tspan></text>
<text x="604.60" y="315.79" font-size="13.5" fill="#222" stroke="#222" stroke-width="0.22" font-weight="bold" textLength="50.40" lengthAdjust="spacingAndGlyphs"><tspan dy="1.08" font-size="16.20" stroke-width="1.21">离散曲线</tspan></text>
<text x="665.00" y="314.27" font-size="9.2" fill="#222" stroke="#222" stroke-width="0.22" textLength="46.00" lengthAdjust="spacingAndGlyphs">144250.361</text>
<rect x="557.60" y="323.00" width="181.70" height="142.50" fill="#000"/>
<path d="M557.60 326.50H739.30M557.60 329.50H739.30M557.60 332.50H739.30M557.60 335.50H739.30M557.60 338.50H739.30M557.60 342.50H739.30M557.60 345.50H739.30M557.60 348.50H739.30M557.60 351.50H739.30M557.60 354.50H739.30M557.60 357.50H739.30M557.60 361.50H739.30M557.60 364.50H739.30M557.60 367.50H739.30M557.60 370.50H739.30M557.60 373.50H739.30M557.60 376.50H739.30M557.60 380.50H739.30M557.60 383.50H739.30M557.60 386.50H739.30M557.60 389.50H739.30M557.60 392.50H739.30M557.60 395.50H739.30M557.60 399.50H739.30M557.60 402.50H739.30M557.60 405.50H739.30M557.60 408.50H739.30M557.60 411.50H739.30M557.60 414.50H739.30M557.60 418.50H739.30M557.60 421.50H739.30M557.60 424.50H739.30M557.60 427.50H739.30M557.60 430.50H739.30M557.60 433.50H739.30M557.60 437.50H739.30M557.60 440.50H739.30M557.60 443.50H739.30M557.60 446.50H739.30M557.60 449.50H739.30M557.60 452.50H739.30M557.60 456.50H739.30M557.60 459.50H739.30M557.60 462.50H739.30" stroke="#073a07" stroke-width="1" fill="none"/>
<path d="M562.50 323.00V465.50M566.50 323.00V465.50M571.50 323.00V465.50M576.50 323.00V465.50M580.50 323.00V465.50M585.50 323.00V465.50M590.50 323.00V465.50M594.50 323.00V465.50M599.50 323.00V465.50M604.50 323.00V465.50M608.50 323.00V465.50M613.50 323.00V465.50M618.50 323.00V465.50M622.50 323.00V465.50M627.50 323.00V465.50M632.50 323.00V465.50M637.50 323.00V465.50M641.50 323.00V465.50M646.50 323.00V465.50M651.50 323.00V465.50M655.50 323.00V465.50M660.50 323.00V465.50M665.50 323.00V465.50M669.50 323.00V465.50M674.50 323.00V465.50M679.50 323.00V465.50M683.50 323.00V465.50M688.50 323.00V465.50M693.50 323.00V465.50M697.50 323.00V465.50M702.50 323.00V465.50M707.50 323.00V465.50M711.50 323.00V465.50M716.50 323.00V465.50M721.50 323.00V465.50M725.50 323.00V465.50M730.50 323.00V465.50M735.50 323.00V465.50" stroke="#073a07" stroke-width="1" fill="none"/>
<path d="M557.60 338.50H739.30M557.60 354.50H739.30M557.60 370.50H739.30M557.60 386.50H739.30M557.60 402.50H739.30M557.60 418.50H739.30M557.60 433.50H739.30M557.60 449.50H739.30" stroke="#0b5a0b" stroke-width="1" fill="none"/>
<path d="M613.50 323.00V465.50M669.50 323.00V465.50M725.50 323.00V465.50" stroke="#2c4006" stroke-width="1" fill="none"/>
<polyline points="567.40,336.30 577.20,423.60 582.20,456.10 586.70,454.60 591.40,459.60 595.80,443.40 600.90,446.60 605.90,440.70 610.30,450.80 620.10,423.00 623.60,422.10 628.40,421.50 638.70,433.90 643.80,433.90 649.10,424.10 653.50,425.00 658.60,427.40 663.00,428.60 667.40,432.40 672.50,428.60 676.90,431.00 681.30,434.80 686.10,421.50 690.50,424.10 695.50,423.00 700.60,425.90 705.30,415.30 710.30,418.20 724.20,428.00 729.00,423.60 739.30,427.60" fill="none" stroke="#c4b81a" stroke-width="1.15"/>
<text x="506.60" y="325.98" font-size="8.4" fill="#3a3a3a" stroke="#3a3a3a" stroke-width="0.22" textLength="47.00" lengthAdjust="spacingAndGlyphs">210000.0000</text>
<line x1="554.20" y1="323.50" x2="557.20" y2="323.50" stroke="#555" stroke-width="1"/>
<text x="743.80" y="325.98" font-size="8.4" fill="#e04040" stroke="#e04040" stroke-width="0.22" textLength="33.70" lengthAdjust="spacingAndGlyphs">9.000E-2</text>
<text x="506.60" y="341.82" font-size="8.4" fill="#3a3a3a" stroke="#3a3a3a" stroke-width="0.22" textLength="47.00" lengthAdjust="spacingAndGlyphs">200000.0000</text>
<line x1="554.20" y1="338.50" x2="557.20" y2="338.50" stroke="#555" stroke-width="1"/>
<text x="743.80" y="341.82" font-size="8.4" fill="#e04040" stroke="#e04040" stroke-width="0.22" textLength="33.70" lengthAdjust="spacingAndGlyphs">8.000E-2</text>
<text x="506.60" y="357.65" font-size="8.4" fill="#3a3a3a" stroke="#3a3a3a" stroke-width="0.22" textLength="47.00" lengthAdjust="spacingAndGlyphs">190000.0000</text>
<line x1="554.20" y1="354.50" x2="557.20" y2="354.50" stroke="#555" stroke-width="1"/>
<text x="743.80" y="357.65" font-size="8.4" fill="#e04040" stroke="#e04040" stroke-width="0.22" textLength="33.70" lengthAdjust="spacingAndGlyphs">7.000E-2</text>
<text x="506.60" y="373.48" font-size="8.4" fill="#3a3a3a" stroke="#3a3a3a" stroke-width="0.22" textLength="47.00" lengthAdjust="spacingAndGlyphs">180000.0000</text>
<line x1="554.20" y1="370.50" x2="557.20" y2="370.50" stroke="#555" stroke-width="1"/>
<text x="743.80" y="373.48" font-size="8.4" fill="#e04040" stroke="#e04040" stroke-width="0.22" textLength="33.70" lengthAdjust="spacingAndGlyphs">6.000E-2</text>
<text x="506.60" y="389.32" font-size="8.4" fill="#3a3a3a" stroke="#3a3a3a" stroke-width="0.22" textLength="47.00" lengthAdjust="spacingAndGlyphs">170000.0000</text>
<line x1="554.20" y1="386.50" x2="557.20" y2="386.50" stroke="#555" stroke-width="1"/>
<text x="743.80" y="389.32" font-size="8.4" fill="#e04040" stroke="#e04040" stroke-width="0.22" textLength="33.70" lengthAdjust="spacingAndGlyphs">5.000E-2</text>
<text x="506.60" y="405.15" font-size="8.4" fill="#3a3a3a" stroke="#3a3a3a" stroke-width="0.22" textLength="47.00" lengthAdjust="spacingAndGlyphs">160000.0000</text>
<line x1="554.20" y1="402.50" x2="557.20" y2="402.50" stroke="#555" stroke-width="1"/>
<text x="743.80" y="405.15" font-size="8.4" fill="#e04040" stroke="#e04040" stroke-width="0.22" textLength="33.70" lengthAdjust="spacingAndGlyphs">4.000E-2</text>
<text x="506.60" y="420.98" font-size="8.4" fill="#3a3a3a" stroke="#3a3a3a" stroke-width="0.22" textLength="47.00" lengthAdjust="spacingAndGlyphs">150000.0000</text>
<line x1="554.20" y1="418.50" x2="557.20" y2="418.50" stroke="#555" stroke-width="1"/>
<text x="743.80" y="420.98" font-size="8.4" fill="#e04040" stroke="#e04040" stroke-width="0.22" textLength="33.70" lengthAdjust="spacingAndGlyphs">3.000E-2</text>
<text x="506.60" y="436.82" font-size="8.4" fill="#3a3a3a" stroke="#3a3a3a" stroke-width="0.22" textLength="47.00" lengthAdjust="spacingAndGlyphs">140000.0000</text>
<line x1="554.20" y1="433.50" x2="557.20" y2="433.50" stroke="#555" stroke-width="1"/>
<text x="743.80" y="436.82" font-size="8.4" fill="#e04040" stroke="#e04040" stroke-width="0.22" textLength="33.70" lengthAdjust="spacingAndGlyphs">2.000E-2</text>
<text x="506.60" y="452.65" font-size="8.4" fill="#3a3a3a" stroke="#3a3a3a" stroke-width="0.22" textLength="47.00" lengthAdjust="spacingAndGlyphs">130000.0000</text>
<line x1="554.20" y1="449.50" x2="557.20" y2="449.50" stroke="#555" stroke-width="1"/>
<text x="743.80" y="452.65" font-size="8.4" fill="#e04040" stroke="#e04040" stroke-width="0.22" textLength="33.70" lengthAdjust="spacingAndGlyphs">1.000E-2</text>
<text x="506.60" y="468.48" font-size="8.4" fill="#3a3a3a" stroke="#3a3a3a" stroke-width="0.22" textLength="47.00" lengthAdjust="spacingAndGlyphs">120000.0000</text>
<line x1="554.20" y1="465.50" x2="557.20" y2="465.50" stroke="#555" stroke-width="1"/>
<text x="743.80" y="468.48" font-size="8.4" fill="#e04040" stroke="#e04040" stroke-width="0.22" textLength="33.70" lengthAdjust="spacingAndGlyphs">0.000E+0</text>
<line x1="740.00" y1="323.50" x2="743.00" y2="323.50" stroke="#666" stroke-width="1"/>
<line x1="740.00" y1="326.50" x2="742.00" y2="326.50" stroke="#666" stroke-width="1"/>
<line x1="740.00" y1="330.50" x2="742.00" y2="330.50" stroke="#666" stroke-width="1"/>
<line x1="740.00" y1="334.50" x2="742.00" y2="334.50" stroke="#666" stroke-width="1"/>
<line x1="740.00" y1="338.50" x2="743.00" y2="338.50" stroke="#666" stroke-width="1"/>
<line x1="740.00" y1="342.50" x2="742.00" y2="342.50" stroke="#666" stroke-width="1"/>
<line x1="740.00" y1="346.50" x2="742.00" y2="346.50" stroke="#666" stroke-width="1"/>
<line x1="740.00" y1="350.50" x2="742.00" y2="350.50" stroke="#666" stroke-width="1"/>
<line x1="740.00" y1="354.50" x2="743.00" y2="354.50" stroke="#666" stroke-width="1"/>
<line x1="740.00" y1="358.50" x2="742.00" y2="358.50" stroke="#666" stroke-width="1"/>
<line x1="740.00" y1="362.50" x2="742.00" y2="362.50" stroke="#666" stroke-width="1"/>
<line x1="740.00" y1="366.50" x2="742.00" y2="366.50" stroke="#666" stroke-width="1"/>
<line x1="740.00" y1="370.50" x2="743.00" y2="370.50" stroke="#666" stroke-width="1"/>
<line x1="740.00" y1="374.50" x2="742.00" y2="374.50" stroke="#666" stroke-width="1"/>
<line x1="740.00" y1="378.50" x2="742.00" y2="378.50" stroke="#666" stroke-width="1"/>
<line x1="740.00" y1="382.50" x2="742.00" y2="382.50" stroke="#666" stroke-width="1"/>
<line x1="740.00" y1="386.50" x2="743.00" y2="386.50" stroke="#666" stroke-width="1"/>
<line x1="740.00" y1="390.50" x2="742.00" y2="390.50" stroke="#666" stroke-width="1"/>
<line x1="740.00" y1="394.50" x2="742.00" y2="394.50" stroke="#666" stroke-width="1"/>
<line x1="740.00" y1="398.50" x2="742.00" y2="398.50" stroke="#666" stroke-width="1"/>
<line x1="740.00" y1="402.50" x2="743.00" y2="402.50" stroke="#666" stroke-width="1"/>
<line x1="740.00" y1="406.50" x2="742.00" y2="406.50" stroke="#666" stroke-width="1"/>
<line x1="740.00" y1="410.50" x2="742.00" y2="410.50" stroke="#666" stroke-width="1"/>
<line x1="740.00" y1="414.50" x2="742.00" y2="414.50" stroke="#666" stroke-width="1"/>
<line x1="740.00" y1="418.50" x2="743.00" y2="418.50" stroke="#666" stroke-width="1"/>
<line x1="740.00" y1="421.50" x2="742.00" y2="421.50" stroke="#666" stroke-width="1"/>
<line x1="740.00" y1="425.50" x2="742.00" y2="425.50" stroke="#666" stroke-width="1"/>
<line x1="740.00" y1="429.50" x2="742.00" y2="429.50" stroke="#666" stroke-width="1"/>
<line x1="740.00" y1="433.50" x2="743.00" y2="433.50" stroke="#666" stroke-width="1"/>
<line x1="740.00" y1="437.50" x2="742.00" y2="437.50" stroke="#666" stroke-width="1"/>
<line x1="740.00" y1="441.50" x2="742.00" y2="441.50" stroke="#666" stroke-width="1"/>
<line x1="740.00" y1="445.50" x2="742.00" y2="445.50" stroke="#666" stroke-width="1"/>
<line x1="740.00" y1="449.50" x2="743.00" y2="449.50" stroke="#666" stroke-width="1"/>
<line x1="740.00" y1="453.50" x2="742.00" y2="453.50" stroke="#666" stroke-width="1"/>
<line x1="740.00" y1="457.50" x2="742.00" y2="457.50" stroke="#666" stroke-width="1"/>
<line x1="740.00" y1="461.50" x2="742.00" y2="461.50" stroke="#666" stroke-width="1"/>
<line x1="740.00" y1="465.50" x2="743.00" y2="465.50" stroke="#666" stroke-width="1"/>
<text x="467.80" y="395.63" font-size="7.4" fill="#3a3a3a" stroke="#3a3a3a" stroke-width="0.22" textLength="55.00" lengthAdjust="spacingAndGlyphs" transform="rotate(-90 495.30 393.00)"><tspan dy="0.59" font-size="8.88" stroke-width="0.40">离散系数</tspan><tspan dy="-0.59"> (ppm)</tspan></text>
<line x1="557.50" y1="466.50" x2="557.50" y2="469.50" stroke="#555" stroke-width="1"/>
<text x="542.75" y="479.98" font-size="8.4" fill="#3a3a3a" stroke="#3a3a3a" stroke-width="0.22" textLength="29.70" lengthAdjust="spacingAndGlyphs">20:42:48</text>
<line x1="614.50" y1="466.50" x2="614.50" y2="469.50" stroke="#555" stroke-width="1"/>
<text x="599.15" y="479.98" font-size="8.4" fill="#3a3a3a" stroke="#3a3a3a" stroke-width="0.22" textLength="29.70" lengthAdjust="spacingAndGlyphs">20:52:48</text>
<line x1="669.50" y1="466.50" x2="669.50" y2="469.50" stroke="#555" stroke-width="1"/>
<text x="654.35" y="479.98" font-size="8.4" fill="#3a3a3a" stroke="#3a3a3a" stroke-width="0.22" textLength="29.70" lengthAdjust="spacingAndGlyphs">21:02:48</text>
<line x1="739.50" y1="466.50" x2="739.50" y2="469.50" stroke="#555" stroke-width="1"/>
<text x="724.45" y="479.98" font-size="8.4" fill="#3a3a3a" stroke="#3a3a3a" stroke-width="0.22" textLength="29.70" lengthAdjust="spacingAndGlyphs">21:15:13</text>
<line x1="725.50" y1="466.50" x2="725.50" y2="469.50" stroke="#555" stroke-width="1"/>
<text x="637.35" y="490.70" font-size="7.6" fill="#3a3a3a" stroke="#3a3a3a" stroke-width="0.22" textLength="14.30" lengthAdjust="spacingAndGlyphs"><tspan dy="0.61" font-size="9.12" stroke-width="0.40">时间</tspan></text>
</svg>
</body></html>
